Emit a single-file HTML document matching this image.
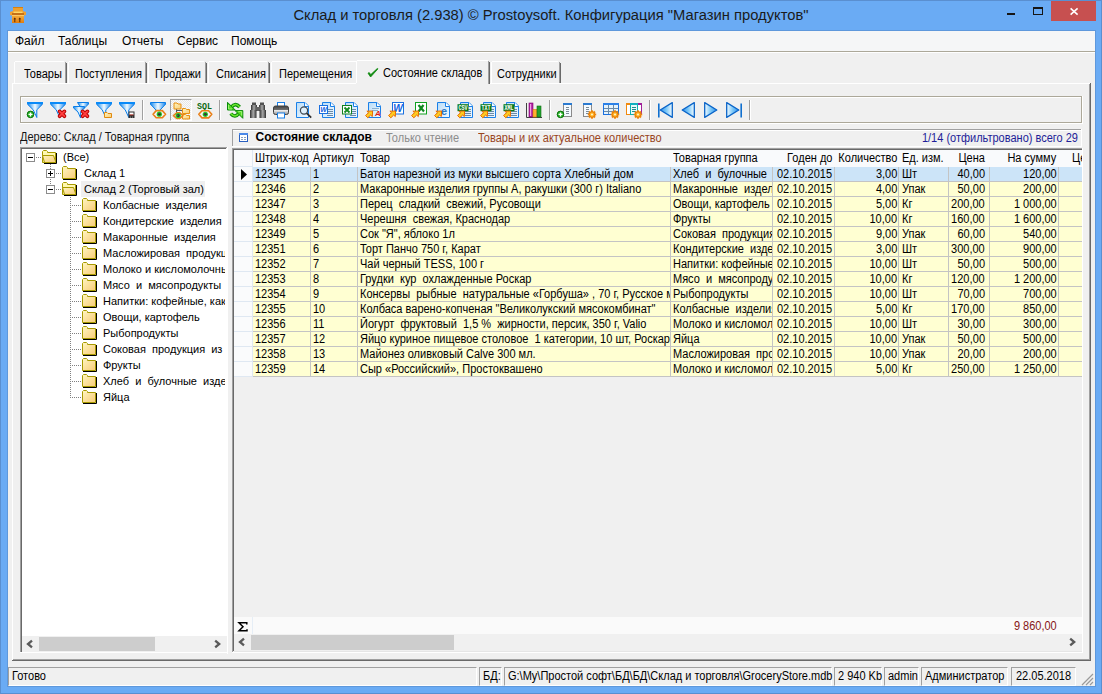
<!DOCTYPE html>
<html><head><meta charset="utf-8"><title>Склад и торговля</title>
<style>
html,body{margin:0;padding:0;width:1102px;height:694px;overflow:hidden;position:relative}
body{font-family:"Liberation Sans", sans-serif;}
div{position:absolute}
.t{white-space:pre;font-family:"Liberation Sans", sans-serif}
.c{white-space:pre;overflow:hidden;font-size:12px;line-height:14px;height:15px;box-sizing:border-box;font-family:"Liberation Sans", sans-serif}
.sl{position:absolute;top:0;transform:scaleX(0.9167);transform-origin:0 0}
.sr{position:absolute;top:0;transform:scaleX(0.9167);transform-origin:100% 0}
svg{position:absolute;overflow:visible}
</style></head><body>
<svg width="0" height="0" style="position:absolute;left:0;top:0">
<defs>
<linearGradient id="gFun" x1="0" x2="1" y1="0" y2="0"><stop offset="0.05" stop-color="#2a94f0"/><stop offset="0.5" stop-color="#f0faff"/><stop offset="0.95" stop-color="#2a90f0"/></linearGradient>
<linearGradient id="gFold" x1="0" x2="1" y1="0" y2="1"><stop offset="0" stop-color="#fff6c0"/><stop offset="1" stop-color="#f8cc78"/></linearGradient>
<linearGradient id="gTriR" x1="0" x2="1" y1="0" y2="0"><stop offset="0" stop-color="#f4fcff"/><stop offset="0.5" stop-color="#7cc8f8"/><stop offset="1" stop-color="#2a90f0"/></linearGradient><linearGradient id="gTriL" x1="1" x2="0" y1="0" y2="0"><stop offset="0" stop-color="#f4fcff"/><stop offset="0.5" stop-color="#7cc8f8"/><stop offset="1" stop-color="#2a90f0"/></linearGradient>
<linearGradient id="gGreen" x1="0" x2="0" y1="0" y2="1"><stop offset="0" stop-color="#90f040"/><stop offset="1" stop-color="#30b010"/></linearGradient>
<linearGradient id="gGray" x1="0" x2="1" y1="0" y2="0"><stop offset="0" stop-color="#303030"/><stop offset="0.5" stop-color="#a8a8a8"/><stop offset="1" stop-color="#303030"/></linearGradient>
<linearGradient id="gPrint" x1="0" x2="0" y1="0" y2="1"><stop offset="0" stop-color="#404040"/><stop offset="0.45" stop-color="#707070"/><stop offset="0.5" stop-color="#f0f0f0"/><stop offset="1" stop-color="#909090"/></linearGradient>
<linearGradient id="gPage" x1="0" x2="1" y1="0" y2="1"><stop offset="0" stop-color="#b8dcf8"/><stop offset="1" stop-color="#f4faff"/></linearGradient>
<linearGradient id="gBox" x1="0" x2="0" y1="0" y2="1"><stop offset="0" stop-color="#f6b040"/><stop offset="1" stop-color="#e07c10"/></linearGradient>
</defs></svg><div style="position:absolute;left:0;top:0;width:1102px;height:694px;background:#6aabf4;"></div>
<div style="position:absolute;left:0px;top:0px;width:1102px;height:1px;background:#5a8fd0"></div>
<div style="position:absolute;left:0px;top:0px;width:1px;height:694px;background:#5a8fd0"></div>
<div style="position:absolute;left:0px;top:693px;width:1102px;height:1px;background:#5a8fd0"></div>
<div style="position:absolute;left:1101px;top:0px;width:1px;height:694px;background:#5a8fd0"></div>
<svg style="position:absolute;left:10px;top:7px" width="16" height="16" viewBox="0 0 16 16"><rect x="3" y="0" width="10" height="6" fill="#eea030"/><rect x="3" y="0" width="10" height="1" fill="#d88010"/><rect x="3.5" y="4.6" width="9" height="1.4" fill="#ffd868"/><path d="M0 5 L3 4 V9 L0 8 Z" fill="#f0a030"/><path d="M16 5 L13 4 V9 L16 8 Z" fill="#f0a030"/><rect x="2" y="6" width="12" height="2" fill="#c47018"/><rect x="2" y="8" width="12" height="8" fill="url(#gBox)"/><rect x="2" y="8" width="12" height="1" fill="#ffc860"/><path d="M3.4 12.2 L4.8 10.6 L6.2 12.2 Z M8.4 12.2 L9.8 10.6 L11.2 12.2 Z" fill="#5a2800"/><path d="M4.8 12 V15.2 M9.8 12 V15.2" stroke="#5a2800" stroke-width="1"/></svg>
<div class="t" style="left:551px;top:7.51px;font-size:14.75px;line-height:14.75px;color:#1b1b1b;font-weight:normal;transform:translateX(-50%);">Склад и торговля (2.938) © Prostoysoft. Конфигурация &quot;Магазин продуктов&quot;</div>
<div style="position:absolute;left:1007px;top:13px;width:8px;height:2px;background:#161616"></div>
<div style="position:absolute;left:1033px;top:7px;width:10px;height:8px;box-sizing:border-box;border:1px solid #161616;border-top-width:2px"></div>
<div style="position:absolute;left:1051px;top:1px;width:45px;height:20px;background:#c75050"></div>
<svg style="position:absolute;left:1066px;top:5px" width="15" height="12" viewBox="0 0 15 12"><path d="M4.6 3.4 L11.6 9.6 M11.6 3.4 L4.6 9.6" stroke="#fff" stroke-width="1.6"/></svg>
<div style="position:absolute;left:7px;top:30px;width:1089px;height:657px;background:#5e98dc"></div>
<div style="position:absolute;left:8px;top:31px;width:1087px;height:655px;background:#f0f0f0"></div>
<div style="position:absolute;left:8px;top:31px;width:1087px;height:20px;background:#f5f6f7"></div>
<div style="position:absolute;left:8px;top:51px;width:1087px;height:1px;background:#aca899"></div>
<div style="position:absolute;left:8px;top:52px;width:1087px;height:1px;background:#ffffff"></div>
<div class="t" style="left:15px;top:34.84px;font-size:12px;line-height:12px;color:#000;font-weight:normal;">Файл</div>
<div class="t" style="left:58px;top:34.84px;font-size:12px;line-height:12px;color:#000;font-weight:normal;">Таблицы</div>
<div class="t" style="left:122px;top:34.84px;font-size:12px;line-height:12px;color:#000;font-weight:normal;">Отчеты</div>
<div class="t" style="left:177px;top:34.84px;font-size:12px;line-height:12px;color:#000;font-weight:normal;">Сервис</div>
<div class="t" style="left:231px;top:34.84px;font-size:12px;line-height:12px;color:#000;font-weight:normal;">Помощь</div>
<div style="position:absolute;left:12px;top:83px;width:1079px;height:578px;background:#f0f0f0"></div>
<div style="position:absolute;left:12px;top:83px;width:1078px;height:1px;background:#fff"></div>
<div style="position:absolute;left:12px;top:83px;width:1px;height:577px;background:#fff"></div>
<div style="position:absolute;left:1089px;top:84px;width:1px;height:576px;background:#a0a0a0"></div>
<div style="position:absolute;left:1090px;top:83px;width:1px;height:578px;background:#696969"></div>
<div style="position:absolute;left:13px;top:659px;width:1077px;height:1px;background:#a0a0a0"></div>
<div style="position:absolute;left:12px;top:660px;width:1079px;height:1px;background:#696969"></div>
<div style="position:absolute;left:14px;top:62px;width:53px;height:21px;background:#f0f0f0"></div>
<div style="position:absolute;left:15px;top:61px;width:49px;height:1px;background:#fff"></div>
<div style="position:absolute;left:14px;top:62px;width:1px;height:21px;background:#fff"></div>
<div style="position:absolute;left:65px;top:62px;width:1px;height:21px;background:#a0a0a0"></div>
<div style="position:absolute;left:66px;top:63px;width:1px;height:20px;background:#696969"></div>
<div class="t" style="left:24px;top:67.84px;font-size:12px;line-height:12px;color:#000;font-weight:normal;transform:scaleX(0.9167);transform-origin:0 0;">Товары</div>
<div style="position:absolute;left:68px;top:62px;width:79px;height:21px;background:#f0f0f0"></div>
<div style="position:absolute;left:69px;top:61px;width:75px;height:1px;background:#fff"></div>
<div style="position:absolute;left:68px;top:62px;width:1px;height:21px;background:#fff"></div>
<div style="position:absolute;left:145px;top:62px;width:1px;height:21px;background:#a0a0a0"></div>
<div style="position:absolute;left:146px;top:63px;width:1px;height:20px;background:#696969"></div>
<div class="t" style="left:75px;top:67.84px;font-size:12px;line-height:12px;color:#000;font-weight:normal;transform:scaleX(0.9167);transform-origin:0 0;">Поступления</div>
<div style="position:absolute;left:148px;top:62px;width:59px;height:21px;background:#f0f0f0"></div>
<div style="position:absolute;left:149px;top:61px;width:55px;height:1px;background:#fff"></div>
<div style="position:absolute;left:148px;top:62px;width:1px;height:21px;background:#fff"></div>
<div style="position:absolute;left:205px;top:62px;width:1px;height:21px;background:#a0a0a0"></div>
<div style="position:absolute;left:206px;top:63px;width:1px;height:20px;background:#696969"></div>
<div class="t" style="left:155px;top:67.84px;font-size:12px;line-height:12px;color:#000;font-weight:normal;transform:scaleX(0.9167);transform-origin:0 0;">Продажи</div>
<div style="position:absolute;left:208px;top:62px;width:62px;height:21px;background:#f0f0f0"></div>
<div style="position:absolute;left:209px;top:61px;width:58px;height:1px;background:#fff"></div>
<div style="position:absolute;left:208px;top:62px;width:1px;height:21px;background:#fff"></div>
<div style="position:absolute;left:268px;top:62px;width:1px;height:21px;background:#a0a0a0"></div>
<div style="position:absolute;left:269px;top:63px;width:1px;height:20px;background:#696969"></div>
<div class="t" style="left:216px;top:67.84px;font-size:12px;line-height:12px;color:#000;font-weight:normal;transform:scaleX(0.9167);transform-origin:0 0;">Списания</div>
<div style="position:absolute;left:271px;top:62px;width:88px;height:21px;background:#f0f0f0"></div>
<div style="position:absolute;left:272px;top:61px;width:84px;height:1px;background:#fff"></div>
<div style="position:absolute;left:271px;top:62px;width:1px;height:21px;background:#fff"></div>
<div class="t" style="left:279px;top:67.84px;font-size:12px;line-height:12px;color:#000;font-weight:normal;transform:scaleX(0.9167);transform-origin:0 0;">Перемещения</div>
<div style="position:absolute;left:491px;top:62px;width:70px;height:21px;background:#f0f0f0"></div>
<div style="position:absolute;left:492px;top:61px;width:66px;height:1px;background:#fff"></div>
<div style="position:absolute;left:491px;top:62px;width:1px;height:21px;background:#fff"></div>
<div style="position:absolute;left:559px;top:62px;width:1px;height:21px;background:#a0a0a0"></div>
<div style="position:absolute;left:560px;top:63px;width:1px;height:20px;background:#696969"></div>
<div class="t" style="left:497px;top:67.84px;font-size:12px;line-height:12px;color:#000;font-weight:normal;transform:scaleX(0.9167);transform-origin:0 0;">Сотрудники</div>
<div style="position:absolute;left:356px;top:61px;width:134px;height:23px;background:#f0f0f0"></div>
<div style="position:absolute;left:357px;top:60px;width:131px;height:1px;background:#fff"></div>
<div style="position:absolute;left:356px;top:61px;width:1px;height:22px;background:#fff"></div>
<div style="position:absolute;left:488px;top:61px;width:1px;height:23px;background:#a0a0a0"></div>
<div style="position:absolute;left:489px;top:62px;width:1px;height:22px;background:#696969"></div>
<svg style="position:absolute;left:367px;top:68px" width="12" height="10" viewBox="0 0 12 10"><path d="M1 5.2 L3.6 9 L11 0.8 L10.2 0.6 L3.8 6.6 L2.2 4.6 Z" fill="#108a10" stroke="#108a10" stroke-width="0.8" stroke-linejoin="round"/></svg>
<div class="t" style="left:383px;top:66.84px;font-size:12px;line-height:12px;color:#000;font-weight:normal;transform:scaleX(0.9167);transform-origin:0 0;">Состояние складов</div>
<div style="position:absolute;left:20px;top:96px;width:1062px;height:1px;background:#aca899"></div>
<div style="position:absolute;left:20px;top:96px;width:1px;height:27px;background:#aca899"></div>
<div style="position:absolute;left:21px;top:97px;width:1060px;height:1px;background:#fff"></div>
<div style="position:absolute;left:21px;top:97px;width:1px;height:25px;background:#fff"></div>
<div style="position:absolute;left:20px;top:122px;width:1062px;height:1px;background:#aca899"></div>
<div style="position:absolute;left:20px;top:123px;width:1063px;height:1px;background:#fff"></div>
<div style="position:absolute;left:1081px;top:96px;width:1px;height:27px;background:#aca899"></div>
<div style="position:absolute;left:1082px;top:96px;width:1px;height:28px;background:#fff"></div>
<div style="position:absolute;left:170px;top:99px;width:22px;height:22px;box-sizing:border-box;border-top:1px solid #a0a0a0;border-left:1px solid #a0a0a0;border-right:1px solid #fff;border-bottom:1px solid #fff;background-color:#f7f7f7;background-image:repeating-conic-gradient(#e6e6e6 0 25%, #fafafa 0 50%);background-size:2px 2px"></div>
<svg style="position:absolute;left:27px;top:102px" width="16" height="16" viewBox="0 0 16 16"><path d="M0.5 0.5 H15.5 V2.2 L9.8 7.8 V15.5 L6.2 7.8 L0.5 2.2 Z" fill="url(#gFun)" stroke="#0a7de8" stroke-width="1" stroke-linejoin="miter"/><rect x="0" y="0" width="16" height="2" fill="#0a8af8"/><circle cx="3.5" cy="12.4" r="3.3" fill="#22b022" stroke="#0a700a" stroke-width="1"/><path d="M1.5 12.4 H5.5 M3.5 10.4 V14.4" stroke="#fff" stroke-width="1.4"/></svg>
<svg style="position:absolute;left:50px;top:102px" width="16" height="16" viewBox="0 0 16 16"><path d="M0.5 0.5 H15.5 V2.2 L9.8 7.8 V15.5 L6.2 7.8 L0.5 2.2 Z" fill="url(#gFun)" stroke="#0a7de8" stroke-width="1" stroke-linejoin="miter"/><rect x="0" y="0" width="16" height="2" fill="#0a8af8"/><g><path d="M9.6 9.4 L14.4 14.2 M14.4 9.4 L9.6 14.2" stroke="#b80000" stroke-width="3.8" stroke-linecap="round"/><path d="M9.6 9.4 L14.4 14.2 M14.4 9.4 L9.6 14.2" stroke="#ff4040" stroke-width="1.8" stroke-linecap="round"/></g></svg>
<svg style="position:absolute;left:73px;top:102px" width="16" height="16" viewBox="0 0 16 16"><path d="M4.5 0.5 H15.5 V2 L11.5 6 H8 Z" fill="url(#gFun)" stroke="#0a7de8"/><path d="M0.5 4.5 H11.5 V6 L7.6 10 V16 L5 10 L0.5 6 Z" fill="url(#gFun)" stroke="#0a7de8"/><g><path d="M9.6 9.4 L14.4 14.2 M14.4 9.4 L9.6 14.2" stroke="#b80000" stroke-width="3.8" stroke-linecap="round"/><path d="M9.6 9.4 L14.4 14.2 M14.4 9.4 L9.6 14.2" stroke="#ff4040" stroke-width="1.8" stroke-linecap="round"/></g></svg>
<svg style="position:absolute;left:96px;top:102px" width="16" height="16" viewBox="0 0 16 16"><path d="M0.5 0.5 H15.5 V2.2 L9.8 7.8 V15.5 L6.2 7.8 L0.5 2.2 Z" fill="url(#gFun)" stroke="#0a7de8" stroke-width="1" stroke-linejoin="miter"/><rect x="0" y="0" width="16" height="2" fill="#0a8af8"/><path d="M8.5 10.5 h2.5 l1 1 h3.5 v4 h-7z" fill="url(#gFold)" stroke="#e08a10"/></svg>
<svg style="position:absolute;left:119px;top:102px" width="16" height="16" viewBox="0 0 16 16"><path d="M0.5 0.5 H15.5 V2.2 L9.8 7.8 V15.5 L6.2 7.8 L0.5 2.2 Z" fill="url(#gFun)" stroke="#0a7de8" stroke-width="1" stroke-linejoin="miter"/><rect x="0" y="0" width="16" height="2" fill="#0a8af8"/><rect x="9.5" y="9.5" width="6" height="6.5" fill="#303030"/><rect x="10.5" y="10.5" width="4" height="2.2" fill="#fff"/><rect x="10.5" y="12.5" width="4" height="0.8" fill="#d03020"/><rect x="11" y="14.6" width="1" height="1" fill="#999"/><rect x="13" y="14.6" width="1" height="1" fill="#999"/></svg>
<svg style="position:absolute;left:150px;top:102px" width="16" height="16" viewBox="0 0 16 16"><path d="M0.5 0.5 H15.5 V2.2 L9.6 8.5 H6.4 L0.5 2.2 Z" fill="url(#gFun)" stroke="#0a7de8"/><path d="M3.0500000000000007 12.2 L6.250000000000001 8.6 H12.350000000000001 L15.55 12.2 L12.350000000000001 15.799999999999999 H6.250000000000001 Z" fill="#f6f6f6" stroke="#e8801a" stroke-width="1.6" stroke-linejoin="round"/><circle cx="9.3" cy="12.2" r="2.6" fill="#28c828"/><circle cx="9.3" cy="12.2" r="1.4" fill="#282828"/><circle cx="9.0" cy="11.799999999999999" r="0.5" fill="#909090"/></svg>
<svg style="position:absolute;left:173px;top:102px" width="16" height="16" viewBox="0 0 16 16"><path d="M3.5 6.5 V11.5 M3.5 8.5 H9" stroke="#505a60" stroke-width="1"/><path d="M1.0 1.0 h3 l1 1 h3 v5 h-7z" fill="url(#gFold)" stroke="#e89010" stroke-width="1"/><path d="M9.5 6.5 h3 l1 1 h3 v4 h-7z" fill="url(#gFold)" stroke="#e89010" stroke-width="1"/><path d="M9.5 12.5 h3 l1 1 h3 v3.5 h-7z" fill="url(#gFold)" stroke="#e89010" stroke-width="1"/><path d="M0.4500000000000002 13.6 L3.6500000000000004 10.85 H6.749999999999999 L9.95 13.6 L6.749999999999999 16.35 H3.6500000000000004 Z" fill="#f6f6f6" stroke="#e8801a" stroke-width="1.6" stroke-linejoin="round"/><circle cx="5.2" cy="13.6" r="2.6" fill="#28c828"/><circle cx="5.2" cy="13.6" r="1.4" fill="#282828"/><circle cx="4.9" cy="13.2" r="0.5" fill="#909090"/></svg>
<svg style="position:absolute;left:196px;top:102px" width="16" height="16" viewBox="0 0 16 16"><text x="8.6" y="7.4" font-family="Liberation Mono" font-weight="bold" font-size="9.5" fill="#0a6a10" text-anchor="middle" textLength="15" lengthAdjust="spacingAndGlyphs">SQL</text><path d="M2.8000000000000007 12.3 L6.000000000000001 8.700000000000001 H12.600000000000001 L15.8 12.3 L12.600000000000001 15.9 H6.000000000000001 Z" fill="#f6f6f6" stroke="#e8801a" stroke-width="1.6" stroke-linejoin="round"/><circle cx="9.3" cy="12.3" r="2.6" fill="#28c828"/><circle cx="9.3" cy="12.3" r="1.4" fill="#282828"/><circle cx="9.0" cy="11.9" r="0.5" fill="#909090"/></svg>
<svg style="position:absolute;left:227px;top:102px" width="16" height="16" viewBox="0 0 16 16"><g transform="translate(0 -0.2)"><g transform="rotate(0 8 8)"><path d="M4.2 5.6 Q8.3 0.2 12.6 5.2" fill="none" stroke="#0a8a0a" stroke-width="3.6"/><path d="M4.2 5.6 Q8.3 0.2 12.6 5.2" fill="none" stroke="#6ee830" stroke-width="1.5"/><path d="M0.5 0.5 V8.2 H8.2 Z" fill="#52d820" stroke="#0a8a0a" stroke-width="1" stroke-linejoin="miter"/><path d="M1.6 3.2 V7.2 H5" fill="none" stroke="#b8ff90" stroke-width="0.8"/></g></g><g transform="translate(0.3 0.8)"><g transform="rotate(180 8 8)"><path d="M4.2 5.6 Q8.3 0.2 12.6 5.2" fill="none" stroke="#0a8a0a" stroke-width="3.6"/><path d="M4.2 5.6 Q8.3 0.2 12.6 5.2" fill="none" stroke="#6ee830" stroke-width="1.5"/><path d="M0.5 0.5 V8.2 H8.2 Z" fill="#52d820" stroke="#0a8a0a" stroke-width="1" stroke-linejoin="miter"/><path d="M1.6 3.2 V7.2 H5" fill="none" stroke="#b8ff90" stroke-width="0.8"/></g></g></svg>
<svg style="position:absolute;left:250px;top:102px" width="16" height="16" viewBox="0 0 16 16"><rect x="2" y="0.5" width="4" height="3" fill="#505050"/><rect x="10" y="0.5" width="4" height="3" fill="#505050"/><rect x="1" y="3" width="6" height="6" fill="url(#gGray)"/><rect x="9" y="3" width="6" height="6" fill="url(#gGray)"/><rect x="6" y="5" width="4" height="4" fill="#606060"/><rect x="0" y="8" width="6.5" height="8" fill="url(#gGray)"/><rect x="9.5" y="8" width="6.5" height="8" fill="url(#gGray)"/></svg>
<svg style="position:absolute;left:273px;top:102px" width="16" height="16" viewBox="0 0 16 16"><rect x="4.5" y="0.5" width="7" height="5" fill="#fff" stroke="#1a80e8"/><rect x="0.5" y="4" width="15" height="8.5" rx="2" fill="url(#gPrint)" stroke="#404040" stroke-width="1"/><rect x="4.5" y="11" width="7" height="5" fill="#fff" stroke="#1a80e8"/></svg>
<svg style="position:absolute;left:296px;top:102px" width="16" height="16" viewBox="0 0 16 16"><path d="M0.5 0.5 H9 L12.5 4 V15.5 H0.5 Z" fill="url(#gPage)" stroke="#1a80e8"/><path d="M8.5 0.5 V4.5 H12.5" fill="#fff" stroke="#1a80e8"/><circle cx="8" cy="8.5" r="3.6" fill="#dff0fb" stroke="#404850" stroke-width="1.2"/><path d="M10.6 11.2 L15.2 15.6" stroke="#303030" stroke-width="1.8"/></svg>
<svg style="position:absolute;left:319px;top:102px" width="16" height="16" viewBox="0 0 16 16"><path d="M3.5 0.5 H12 L15.5 4 V15.5 H3.5 Z" fill="url(#gPage)" stroke="#1a80e8" stroke-width="1"/><path d="M11.5 0.5 V4.5 H15.5" fill="#fff" stroke="#1a80e8" stroke-width="1"/><path d="M8 7.5 H14 M8 9.5 H14 M8 11.5 H14 M8 13.5 H14" stroke="#6a8aa8" stroke-width="1"/><rect x="0.5" y="3.5" width="8" height="8" fill="#fff" stroke="#1a70e0"/><text x="4.5" y="10" font-family="Liberation Sans" font-weight="bold" font-style="italic" font-size="7" fill="#1060e0" text-anchor="middle">W</text></svg>
<svg style="position:absolute;left:342px;top:102px" width="16" height="16" viewBox="0 0 16 16"><path d="M3.5 0.5 H12 L15.5 4 V15.5 H3.5 Z" fill="url(#gPage)" stroke="#1a80e8" stroke-width="1"/><path d="M11.5 0.5 V4.5 H15.5" fill="#fff" stroke="#1a80e8" stroke-width="1"/><path d="M8 7.5 H14 M8 9.5 H14 M8 11.5 H14 M8 13.5 H14" stroke="#6a8aa8" stroke-width="1"/><rect x="0.5" y="3.5" width="9" height="8.5" fill="#fff" stroke="#108020"/><path d="M2.5 5.5 L7.5 10.5 M7.5 5.5 L2.5 10.5" stroke="#108a20" stroke-width="1.8"/></svg>
<svg style="position:absolute;left:365px;top:102px" width="16" height="16" viewBox="0 0 16 16"><path d="M3.5 0.5 H12 L15.5 4 V15.5 H3.5 Z" fill="url(#gPage)" stroke="#1a80e8" stroke-width="1"/><path d="M11.5 0.5 V4.5 H15.5" fill="#fff" stroke="#1a80e8" stroke-width="1"/><path d="M7 6.5 H14 M7 8.5 H13" stroke="#88b0d0"/><text x="13" y="14" font-family="Liberation Sans" font-weight="bold" font-style="italic" font-size="8" fill="#e02010" text-anchor="middle">A</text><path d="M7.6 9 L7.3 14.6 L5.7 13 L2.8 15.8 L0.6 13.6 L3.5 10.7 L1.9 9.2 Z" fill="#ffcc20" stroke="#e86800" stroke-width="1" stroke-linejoin="round"/></svg>
<svg style="position:absolute;left:388px;top:102px" width="16" height="16" viewBox="0 0 16 16"><rect x="4.5" y="0.5" width="11" height="11.5" fill="#fff" stroke="#1a70e0"/><text x="10" y="10" font-family="Liberation Sans" font-weight="bold" font-style="italic" font-size="10" fill="#1060e0" text-anchor="middle">W</text><path d="M7.6 9 L7.3 14.6 L5.7 13 L2.8 15.8 L0.6 13.6 L3.5 10.7 L1.9 9.2 Z" fill="#ffcc20" stroke="#e86800" stroke-width="1" stroke-linejoin="round"/></svg>
<svg style="position:absolute;left:411px;top:102px" width="16" height="16" viewBox="0 0 16 16"><rect x="4.5" y="0.5" width="11" height="11.5" fill="#fff" stroke="#10a020"/><path d="M7.5 3 L13 9.5 M12.5 3 L7.5 9.5" stroke="#108a20" stroke-width="2.2"/><path d="M7.6 9 L7.3 14.6 L5.7 13 L2.8 15.8 L0.6 13.6 L3.5 10.7 L1.9 9.2 Z" fill="#ffcc20" stroke="#e86800" stroke-width="1" stroke-linejoin="round"/></svg>
<svg style="position:absolute;left:434px;top:102px" width="16" height="16" viewBox="0 0 16 16"><path d="M3.5 0.5 H12 L15.5 4 V15.5 H3.5 Z" fill="url(#gPage)" stroke="#1a80e8" stroke-width="1"/><path d="M11.5 0.5 V4.5 H15.5" fill="#fff" stroke="#1a80e8" stroke-width="1"/><text x="10" y="13" font-family="Liberation Sans" font-weight="bold" font-size="11" fill="#2a78c8" text-anchor="middle">e</text><path d="M7.6 9 L7.3 14.6 L5.7 13 L2.8 15.8 L0.6 13.6 L3.5 10.7 L1.9 9.2 Z" fill="#ffcc20" stroke="#e86800" stroke-width="1" stroke-linejoin="round"/></svg>
<svg style="position:absolute;left:457px;top:102px" width="16" height="16" viewBox="0 0 16 16"><path d="M3.5 0.5 H12 L15.5 4 V15.5 H3.5 Z" fill="url(#gPage)" stroke="#1a80e8" stroke-width="1"/><path d="M11.5 0.5 V4.5 H15.5" fill="#fff" stroke="#1a80e8" stroke-width="1"/><path d="M8 7.5 H14 M8 9.5 H14 M8 11.5 H14 M8 13.5 H14" stroke="#6a8aa8" stroke-width="1"/><rect x="0.5" y="2.2" width="11" height="7" fill="#0a7a1a"/><text x="6.0" y="8.2" font-family="Liberation Mono" font-weight="bold" font-size="7" fill="#fff" text-anchor="middle" textLength="9" lengthAdjust="spacingAndGlyphs">CSV</text><path d="M7.6 9 L7.3 14.6 L5.7 13 L2.8 15.8 L0.6 13.6 L3.5 10.7 L1.9 9.2 Z" fill="#ffcc20" stroke="#e86800" stroke-width="1" stroke-linejoin="round"/></svg>
<svg style="position:absolute;left:480px;top:102px" width="16" height="16" viewBox="0 0 16 16"><path d="M3.5 0.5 H12 L15.5 4 V15.5 H3.5 Z" fill="url(#gPage)" stroke="#1a80e8" stroke-width="1"/><path d="M11.5 0.5 V4.5 H15.5" fill="#fff" stroke="#1a80e8" stroke-width="1"/><path d="M8 7.5 H14 M8 9.5 H14 M8 11.5 H14 M8 13.5 H14" stroke="#6a8aa8" stroke-width="1"/><rect x="0.5" y="2.2" width="11" height="7" fill="#0a7a1a"/><text x="6.0" y="8.2" font-family="Liberation Mono" font-weight="bold" font-size="7" fill="#fff" text-anchor="middle" textLength="9" lengthAdjust="spacingAndGlyphs">TXT</text><path d="M7.6 9 L7.3 14.6 L5.7 13 L2.8 15.8 L0.6 13.6 L3.5 10.7 L1.9 9.2 Z" fill="#ffcc20" stroke="#e86800" stroke-width="1" stroke-linejoin="round"/></svg>
<svg style="position:absolute;left:503px;top:102px" width="16" height="16" viewBox="0 0 16 16"><path d="M3.5 0.5 H12 L15.5 4 V15.5 H3.5 Z" fill="url(#gPage)" stroke="#1a80e8" stroke-width="1"/><path d="M11.5 0.5 V4.5 H15.5" fill="#fff" stroke="#1a80e8" stroke-width="1"/><path d="M8 7.5 H14 M8 9.5 H14 M8 11.5 H14 M8 13.5 H14" stroke="#6a8aa8" stroke-width="1"/><rect x="0.5" y="2.2" width="11" height="7" fill="#0a7a1a"/><text x="6.0" y="8.2" font-family="Liberation Mono" font-weight="bold" font-size="7" fill="#fff" text-anchor="middle" textLength="9" lengthAdjust="spacingAndGlyphs">XML</text><path d="M7.6 9 L7.3 14.6 L5.7 13 L2.8 15.8 L0.6 13.6 L3.5 10.7 L1.9 9.2 Z" fill="#ffcc20" stroke="#e86800" stroke-width="1" stroke-linejoin="round"/></svg>
<svg style="position:absolute;left:526px;top:102px" width="16" height="16" viewBox="0 0 16 16"><path d="M0.5 1 V15.5 H16" fill="none" stroke="#404040" stroke-width="1"/><rect x="3" y="1" width="4" height="14" fill="#b020a0" stroke="#800070" stroke-width="0.6"/><rect x="4" y="2" width="1.2" height="12" fill="#f0a0e8"/><rect x="7" y="7.5" width="4" height="7.5" fill="#ffb030" stroke="#d08010" stroke-width="0.6"/><rect x="11" y="4" width="4" height="11" fill="#20a030" stroke="#107010" stroke-width="0.6"/></svg>
<svg style="position:absolute;left:557px;top:102px" width="16" height="16" viewBox="0 0 16 16"><rect x="6.5" y="1.5" width="8" height="13" fill="#f4faff" stroke="#8a8a8a"/><rect x="6" y="1" width="9" height="2" fill="#2a7ad0"/><path d="M9 5.5 H12 M9 7.5 H12 M9 9.5 H12 M9 11.5 H12" stroke="#7a8a98"/><circle cx="3.5" cy="12.4" r="3.3" fill="#22b022" stroke="#0a700a" stroke-width="1"/><path d="M1.5 12.4 H5.5 M3.5 10.4 V14.4" stroke="#fff" stroke-width="1.4"/></svg>
<svg style="position:absolute;left:580px;top:102px" width="16" height="16" viewBox="0 0 16 16"><rect x="3.5" y="1.5" width="8" height="13" fill="#f4faff" stroke="#8a8a8a"/><rect x="3" y="1" width="9" height="2" fill="#2a7ad0"/><path d="M6 5.5 H9 M6 7.5 H9 M6 9.5 H9 M6 11.5 H9" stroke="#7a8a98"/><rect x="11" y="8.3" width="2" height="2.2" fill="#f08a10" transform="rotate(0 12 12.5)"/><rect x="11" y="8.3" width="2" height="2.2" fill="#f08a10" transform="rotate(45 12 12.5)"/><rect x="11" y="8.3" width="2" height="2.2" fill="#f08a10" transform="rotate(90 12 12.5)"/><rect x="11" y="8.3" width="2" height="2.2" fill="#f08a10" transform="rotate(135 12 12.5)"/><rect x="11" y="8.3" width="2" height="2.2" fill="#f08a10" transform="rotate(180 12 12.5)"/><rect x="11" y="8.3" width="2" height="2.2" fill="#f08a10" transform="rotate(225 12 12.5)"/><rect x="11" y="8.3" width="2" height="2.2" fill="#f08a10" transform="rotate(270 12 12.5)"/><rect x="11" y="8.3" width="2" height="2.2" fill="#f08a10" transform="rotate(315 12 12.5)"/><circle cx="12" cy="12.5" r="2.8" fill="#ffb020" stroke="#e07000" stroke-width="0.8"/><circle cx="12" cy="12.5" r="1.1" fill="#fff2c0"/></svg>
<svg style="position:absolute;left:603px;top:102px" width="16" height="16" viewBox="0 0 16 16"><rect x="0.5" y="1.5" width="15" height="11" fill="#e4f2fc" stroke="#1a70e0"/><rect x="0" y="1" width="16" height="2" fill="#2a80e8"/><path d="M1 6.5 H15 M1 9.5 H15 M5.5 3 V12 M10.5 3 V12" stroke="#6a8aa8"/><rect x="11" y="8.3" width="2" height="2.2" fill="#f08a10" transform="rotate(0 12 12.5)"/><rect x="11" y="8.3" width="2" height="2.2" fill="#f08a10" transform="rotate(45 12 12.5)"/><rect x="11" y="8.3" width="2" height="2.2" fill="#f08a10" transform="rotate(90 12 12.5)"/><rect x="11" y="8.3" width="2" height="2.2" fill="#f08a10" transform="rotate(135 12 12.5)"/><rect x="11" y="8.3" width="2" height="2.2" fill="#f08a10" transform="rotate(180 12 12.5)"/><rect x="11" y="8.3" width="2" height="2.2" fill="#f08a10" transform="rotate(225 12 12.5)"/><rect x="11" y="8.3" width="2" height="2.2" fill="#f08a10" transform="rotate(270 12 12.5)"/><rect x="11" y="8.3" width="2" height="2.2" fill="#f08a10" transform="rotate(315 12 12.5)"/><circle cx="12" cy="12.5" r="2.8" fill="#ffb020" stroke="#e07000" stroke-width="0.8"/><circle cx="12" cy="12.5" r="1.1" fill="#fff2c0"/></svg>
<svg style="position:absolute;left:626px;top:102px" width="16" height="16" viewBox="0 0 16 16"><rect x="0.5" y="1.5" width="6" height="11" fill="#fff" stroke="#f08a10"/><rect x="0" y="1" width="7" height="2" fill="#f08a10"/><rect x="9.5" y="1.5" width="6" height="11" fill="#fff" stroke="#a0209a"/><rect x="9" y="1" width="7" height="2" fill="#a0209a"/><rect x="4.5" y="1.5" width="7" height="11" fill="#e8fafa" stroke="#10b0b0"/><rect x="4" y="1" width="8" height="2" fill="#10b0c0"/><path d="M6 5.5 H10 M6 7.5 H10 M6 9.5 H10" stroke="#208a90"/><rect x="11" y="8.3" width="2" height="2.2" fill="#f08a10" transform="rotate(0 12 12.5)"/><rect x="11" y="8.3" width="2" height="2.2" fill="#f08a10" transform="rotate(45 12 12.5)"/><rect x="11" y="8.3" width="2" height="2.2" fill="#f08a10" transform="rotate(90 12 12.5)"/><rect x="11" y="8.3" width="2" height="2.2" fill="#f08a10" transform="rotate(135 12 12.5)"/><rect x="11" y="8.3" width="2" height="2.2" fill="#f08a10" transform="rotate(180 12 12.5)"/><rect x="11" y="8.3" width="2" height="2.2" fill="#f08a10" transform="rotate(225 12 12.5)"/><rect x="11" y="8.3" width="2" height="2.2" fill="#f08a10" transform="rotate(270 12 12.5)"/><rect x="11" y="8.3" width="2" height="2.2" fill="#f08a10" transform="rotate(315 12 12.5)"/><circle cx="12" cy="12.5" r="2.8" fill="#ffb020" stroke="#e07000" stroke-width="0.8"/><circle cx="12" cy="12.5" r="1.1" fill="#fff2c0"/></svg>
<svg style="position:absolute;left:657px;top:102px" width="16" height="16" viewBox="0 0 16 16"><rect x="1" y="1.5" width="1.6" height="14" fill="#1070d0"/><path d="M15.3 0.6 V15.4 L3.2 8 Z" fill="url(#gTriL)" stroke="#0a64c8" stroke-width="1.3" stroke-linejoin="round"/></svg>
<svg style="position:absolute;left:680px;top:102px" width="16" height="16" viewBox="0 0 16 16"><path d="M14.3 0.6 V15.4 L2.2 8 Z" fill="url(#gTriL)" stroke="#0a64c8" stroke-width="1.3" stroke-linejoin="round"/></svg>
<svg style="position:absolute;left:703px;top:102px" width="16" height="16" viewBox="0 0 16 16"><path d="M1.7 0.6 V15.4 L13.8 8 Z" fill="url(#gTriR)" stroke="#0a64c8" stroke-width="1.3" stroke-linejoin="round"/></svg>
<svg style="position:absolute;left:726px;top:102px" width="16" height="16" viewBox="0 0 16 16"><rect x="14.4" y="1.5" width="1.6" height="14" fill="#1070d0"/><path d="M0.7 0.6 V15.4 L12.8 8 Z" fill="url(#gTriR)" stroke="#0a64c8" stroke-width="1.3" stroke-linejoin="round"/></svg>
<div style="position:absolute;left:142px;top:100px;width:1px;height:20px;background:#a0a0a0"></div>
<div style="position:absolute;left:143px;top:100px;width:1px;height:20px;background:#fff"></div>
<div style="position:absolute;left:219px;top:100px;width:1px;height:20px;background:#a0a0a0"></div>
<div style="position:absolute;left:220px;top:100px;width:1px;height:20px;background:#fff"></div>
<div style="position:absolute;left:549px;top:100px;width:1px;height:20px;background:#a0a0a0"></div>
<div style="position:absolute;left:550px;top:100px;width:1px;height:20px;background:#fff"></div>
<div style="position:absolute;left:649px;top:100px;width:1px;height:20px;background:#a0a0a0"></div>
<div style="position:absolute;left:650px;top:100px;width:1px;height:20px;background:#fff"></div>
<div style="position:absolute;left:749px;top:100px;width:1px;height:20px;background:#a0a0a0"></div>
<div style="position:absolute;left:750px;top:100px;width:1px;height:20px;background:#fff"></div>
<div class="t" style="left:20px;top:131.14px;font-size:12px;line-height:12px;color:#141414;font-weight:normal;transform:scaleX(0.9167);transform-origin:0 0;">Дерево: Склад / Товарная группа</div>
<div style="position:absolute;left:20px;top:147px;width:207px;height:1px;background:#a0a0a0"></div>
<div style="position:absolute;left:20px;top:147px;width:1px;height:506px;background:#a0a0a0"></div>
<div style="position:absolute;left:21px;top:148px;width:205px;height:1px;background:#696969"></div>
<div style="position:absolute;left:21px;top:148px;width:1px;height:504px;background:#696969"></div>
<div style="position:absolute;left:22px;top:149px;width:205px;height:503px;background:#fff"></div>
<div style="position:absolute;left:227px;top:147px;width:1px;height:507px;background:#fff"></div>
<div style="position:absolute;left:20px;top:652px;width:208px;height:1px;background:#fff"></div>
<div style="position:absolute;left:22px;top:149px;width:203px;height:487px;overflow:hidden">
<div style="position:absolute;left:4px;top:4px;width:9px;height:9px;box-sizing:border-box;border:1px solid #8c8c8c;background:#fff"></div>
<div style="position:absolute;left:6px;top:8px;width:5px;height:1px;background:#000"></div>
<div style="position:absolute;left:14px;top:8px;width:1px;height:1px;background:#808080"></div>
<div style="position:absolute;left:16px;top:8px;width:1px;height:1px;background:#808080"></div>
<div style="position:absolute;left:18px;top:8px;width:1px;height:1px;background:#808080"></div>
<svg style="position:absolute;left:20px;top:1px" width="16" height="14" viewBox="0 0 16 14"><path d="M0.5 1.5 L1.5 0.5 H4.5 L5.5 1.5 V2.5 H13.5 V12.5 H0.5 Z" fill="#fff8b0" stroke="#a89a00" stroke-width="1"/><path d="M0.5 5.5 H11.5 L14 12.5 H2.5 Z" fill="url(#gFold)" stroke="#a89a00" stroke-width="1"/><path d="M14.5 3 V13.5 H2" fill="none" stroke="#000" stroke-width="1"/></svg>
<div class="t" style="left:41px;top:2.69px;font-size:11px;line-height:11px;color:#000;font-weight:normal;">(Все)</div>
<div style="position:absolute;left:28px;top:15px;width:1px;height:1px;background:#808080"></div>
<div style="position:absolute;left:28px;top:17px;width:1px;height:1px;background:#808080"></div>
<div style="position:absolute;left:28px;top:19px;width:1px;height:1px;background:#808080"></div>
<div style="position:absolute;left:28px;top:30px;width:1px;height:1px;background:#808080"></div>
<div style="position:absolute;left:28px;top:32px;width:1px;height:1px;background:#808080"></div>
<div style="position:absolute;left:28px;top:34px;width:1px;height:1px;background:#808080"></div>
<div style="position:absolute;left:24px;top:20px;width:9px;height:9px;box-sizing:border-box;border:1px solid #8c8c8c;background:#fff"></div>
<div style="position:absolute;left:26px;top:24px;width:5px;height:1px;background:#000"></div>
<div style="position:absolute;left:28px;top:22px;width:1px;height:5px;background:#000"></div>
<div style="position:absolute;left:34px;top:24px;width:1px;height:1px;background:#808080"></div>
<div style="position:absolute;left:36px;top:24px;width:1px;height:1px;background:#808080"></div>
<div style="position:absolute;left:38px;top:24px;width:1px;height:1px;background:#808080"></div>
<svg style="position:absolute;left:40px;top:17px" width="16" height="14" viewBox="0 0 16 14"><path d="M0.5 1.5 L1.5 0.5 H4.5 L5.5 1.5 V2.5 H13.5 V12.5 H0.5 Z" fill="url(#gFold)" stroke="#a89a00" stroke-width="1"/><path d="M14.5 3 V13.5 H1" fill="none" stroke="#000" stroke-width="1"/></svg>
<div class="t" style="left:62px;top:18.69px;font-size:11px;line-height:11px;color:#000;font-weight:normal;">Склад 1</div>
<div style="position:absolute;left:59px;top:32px;width:124px;height:16px;background:#efefef"></div>
<div style="position:absolute;left:24px;top:36px;width:9px;height:9px;box-sizing:border-box;border:1px solid #8c8c8c;background:#fff"></div>
<div style="position:absolute;left:26px;top:40px;width:5px;height:1px;background:#000"></div>
<div style="position:absolute;left:34px;top:40px;width:1px;height:1px;background:#808080"></div>
<div style="position:absolute;left:36px;top:40px;width:1px;height:1px;background:#808080"></div>
<div style="position:absolute;left:38px;top:40px;width:1px;height:1px;background:#808080"></div>
<svg style="position:absolute;left:40px;top:33px" width="16" height="14" viewBox="0 0 16 14"><path d="M0.5 1.5 L1.5 0.5 H4.5 L5.5 1.5 V2.5 H13.5 V12.5 H0.5 Z" fill="#fff8b0" stroke="#a89a00" stroke-width="1"/><path d="M0.5 5.5 H11.5 L14 12.5 H2.5 Z" fill="url(#gFold)" stroke="#a89a00" stroke-width="1"/><path d="M14.5 3 V13.5 H2" fill="none" stroke="#000" stroke-width="1"/></svg>
<div class="t" style="left:62px;top:34.69px;font-size:11px;line-height:11px;color:#000;font-weight:normal;">Склад 2 (Торговый зал)</div>
<div style="position:absolute;left:48px;top:48px;width:1px;height:1px;background:#808080"></div>
<div style="position:absolute;left:48px;top:50px;width:1px;height:1px;background:#808080"></div>
<div style="position:absolute;left:48px;top:52px;width:1px;height:1px;background:#808080"></div>
<div style="position:absolute;left:48px;top:54px;width:1px;height:1px;background:#808080"></div>
<div style="position:absolute;left:48px;top:56px;width:1px;height:1px;background:#808080"></div>
<div style="position:absolute;left:48px;top:58px;width:1px;height:1px;background:#808080"></div>
<div style="position:absolute;left:48px;top:60px;width:1px;height:1px;background:#808080"></div>
<div style="position:absolute;left:48px;top:62px;width:1px;height:1px;background:#808080"></div>
<div style="position:absolute;left:48px;top:64px;width:1px;height:1px;background:#808080"></div>
<div style="position:absolute;left:48px;top:66px;width:1px;height:1px;background:#808080"></div>
<div style="position:absolute;left:48px;top:68px;width:1px;height:1px;background:#808080"></div>
<div style="position:absolute;left:48px;top:70px;width:1px;height:1px;background:#808080"></div>
<div style="position:absolute;left:48px;top:72px;width:1px;height:1px;background:#808080"></div>
<div style="position:absolute;left:48px;top:74px;width:1px;height:1px;background:#808080"></div>
<div style="position:absolute;left:48px;top:76px;width:1px;height:1px;background:#808080"></div>
<div style="position:absolute;left:48px;top:78px;width:1px;height:1px;background:#808080"></div>
<div style="position:absolute;left:48px;top:80px;width:1px;height:1px;background:#808080"></div>
<div style="position:absolute;left:48px;top:82px;width:1px;height:1px;background:#808080"></div>
<div style="position:absolute;left:48px;top:84px;width:1px;height:1px;background:#808080"></div>
<div style="position:absolute;left:48px;top:86px;width:1px;height:1px;background:#808080"></div>
<div style="position:absolute;left:48px;top:88px;width:1px;height:1px;background:#808080"></div>
<div style="position:absolute;left:48px;top:90px;width:1px;height:1px;background:#808080"></div>
<div style="position:absolute;left:48px;top:92px;width:1px;height:1px;background:#808080"></div>
<div style="position:absolute;left:48px;top:94px;width:1px;height:1px;background:#808080"></div>
<div style="position:absolute;left:48px;top:96px;width:1px;height:1px;background:#808080"></div>
<div style="position:absolute;left:48px;top:98px;width:1px;height:1px;background:#808080"></div>
<div style="position:absolute;left:48px;top:100px;width:1px;height:1px;background:#808080"></div>
<div style="position:absolute;left:48px;top:102px;width:1px;height:1px;background:#808080"></div>
<div style="position:absolute;left:48px;top:104px;width:1px;height:1px;background:#808080"></div>
<div style="position:absolute;left:48px;top:106px;width:1px;height:1px;background:#808080"></div>
<div style="position:absolute;left:48px;top:108px;width:1px;height:1px;background:#808080"></div>
<div style="position:absolute;left:48px;top:110px;width:1px;height:1px;background:#808080"></div>
<div style="position:absolute;left:48px;top:112px;width:1px;height:1px;background:#808080"></div>
<div style="position:absolute;left:48px;top:114px;width:1px;height:1px;background:#808080"></div>
<div style="position:absolute;left:48px;top:116px;width:1px;height:1px;background:#808080"></div>
<div style="position:absolute;left:48px;top:118px;width:1px;height:1px;background:#808080"></div>
<div style="position:absolute;left:48px;top:120px;width:1px;height:1px;background:#808080"></div>
<div style="position:absolute;left:48px;top:122px;width:1px;height:1px;background:#808080"></div>
<div style="position:absolute;left:48px;top:124px;width:1px;height:1px;background:#808080"></div>
<div style="position:absolute;left:48px;top:126px;width:1px;height:1px;background:#808080"></div>
<div style="position:absolute;left:48px;top:128px;width:1px;height:1px;background:#808080"></div>
<div style="position:absolute;left:48px;top:130px;width:1px;height:1px;background:#808080"></div>
<div style="position:absolute;left:48px;top:132px;width:1px;height:1px;background:#808080"></div>
<div style="position:absolute;left:48px;top:134px;width:1px;height:1px;background:#808080"></div>
<div style="position:absolute;left:48px;top:136px;width:1px;height:1px;background:#808080"></div>
<div style="position:absolute;left:48px;top:138px;width:1px;height:1px;background:#808080"></div>
<div style="position:absolute;left:48px;top:140px;width:1px;height:1px;background:#808080"></div>
<div style="position:absolute;left:48px;top:142px;width:1px;height:1px;background:#808080"></div>
<div style="position:absolute;left:48px;top:144px;width:1px;height:1px;background:#808080"></div>
<div style="position:absolute;left:48px;top:146px;width:1px;height:1px;background:#808080"></div>
<div style="position:absolute;left:48px;top:148px;width:1px;height:1px;background:#808080"></div>
<div style="position:absolute;left:48px;top:150px;width:1px;height:1px;background:#808080"></div>
<div style="position:absolute;left:48px;top:152px;width:1px;height:1px;background:#808080"></div>
<div style="position:absolute;left:48px;top:154px;width:1px;height:1px;background:#808080"></div>
<div style="position:absolute;left:48px;top:156px;width:1px;height:1px;background:#808080"></div>
<div style="position:absolute;left:48px;top:158px;width:1px;height:1px;background:#808080"></div>
<div style="position:absolute;left:48px;top:160px;width:1px;height:1px;background:#808080"></div>
<div style="position:absolute;left:48px;top:162px;width:1px;height:1px;background:#808080"></div>
<div style="position:absolute;left:48px;top:164px;width:1px;height:1px;background:#808080"></div>
<div style="position:absolute;left:48px;top:166px;width:1px;height:1px;background:#808080"></div>
<div style="position:absolute;left:48px;top:168px;width:1px;height:1px;background:#808080"></div>
<div style="position:absolute;left:48px;top:170px;width:1px;height:1px;background:#808080"></div>
<div style="position:absolute;left:48px;top:172px;width:1px;height:1px;background:#808080"></div>
<div style="position:absolute;left:48px;top:174px;width:1px;height:1px;background:#808080"></div>
<div style="position:absolute;left:48px;top:176px;width:1px;height:1px;background:#808080"></div>
<div style="position:absolute;left:48px;top:178px;width:1px;height:1px;background:#808080"></div>
<div style="position:absolute;left:48px;top:180px;width:1px;height:1px;background:#808080"></div>
<div style="position:absolute;left:48px;top:182px;width:1px;height:1px;background:#808080"></div>
<div style="position:absolute;left:48px;top:184px;width:1px;height:1px;background:#808080"></div>
<div style="position:absolute;left:48px;top:186px;width:1px;height:1px;background:#808080"></div>
<div style="position:absolute;left:48px;top:188px;width:1px;height:1px;background:#808080"></div>
<div style="position:absolute;left:48px;top:190px;width:1px;height:1px;background:#808080"></div>
<div style="position:absolute;left:48px;top:192px;width:1px;height:1px;background:#808080"></div>
<div style="position:absolute;left:48px;top:194px;width:1px;height:1px;background:#808080"></div>
<div style="position:absolute;left:48px;top:196px;width:1px;height:1px;background:#808080"></div>
<div style="position:absolute;left:48px;top:198px;width:1px;height:1px;background:#808080"></div>
<div style="position:absolute;left:48px;top:200px;width:1px;height:1px;background:#808080"></div>
<div style="position:absolute;left:48px;top:202px;width:1px;height:1px;background:#808080"></div>
<div style="position:absolute;left:48px;top:204px;width:1px;height:1px;background:#808080"></div>
<div style="position:absolute;left:48px;top:206px;width:1px;height:1px;background:#808080"></div>
<div style="position:absolute;left:48px;top:208px;width:1px;height:1px;background:#808080"></div>
<div style="position:absolute;left:48px;top:210px;width:1px;height:1px;background:#808080"></div>
<div style="position:absolute;left:48px;top:212px;width:1px;height:1px;background:#808080"></div>
<div style="position:absolute;left:48px;top:214px;width:1px;height:1px;background:#808080"></div>
<div style="position:absolute;left:48px;top:216px;width:1px;height:1px;background:#808080"></div>
<div style="position:absolute;left:48px;top:218px;width:1px;height:1px;background:#808080"></div>
<div style="position:absolute;left:48px;top:220px;width:1px;height:1px;background:#808080"></div>
<div style="position:absolute;left:48px;top:222px;width:1px;height:1px;background:#808080"></div>
<div style="position:absolute;left:48px;top:224px;width:1px;height:1px;background:#808080"></div>
<div style="position:absolute;left:48px;top:226px;width:1px;height:1px;background:#808080"></div>
<div style="position:absolute;left:48px;top:228px;width:1px;height:1px;background:#808080"></div>
<div style="position:absolute;left:48px;top:230px;width:1px;height:1px;background:#808080"></div>
<div style="position:absolute;left:48px;top:232px;width:1px;height:1px;background:#808080"></div>
<div style="position:absolute;left:48px;top:234px;width:1px;height:1px;background:#808080"></div>
<div style="position:absolute;left:48px;top:236px;width:1px;height:1px;background:#808080"></div>
<div style="position:absolute;left:48px;top:238px;width:1px;height:1px;background:#808080"></div>
<div style="position:absolute;left:48px;top:240px;width:1px;height:1px;background:#808080"></div>
<div style="position:absolute;left:48px;top:242px;width:1px;height:1px;background:#808080"></div>
<div style="position:absolute;left:48px;top:244px;width:1px;height:1px;background:#808080"></div>
<div style="position:absolute;left:48px;top:246px;width:1px;height:1px;background:#808080"></div>
<div style="position:absolute;left:48px;top:248px;width:1px;height:1px;background:#808080"></div>
<div style="position:absolute;left:50px;top:56px;width:1px;height:1px;background:#808080"></div>
<div style="position:absolute;left:52px;top:56px;width:1px;height:1px;background:#808080"></div>
<div style="position:absolute;left:54px;top:56px;width:1px;height:1px;background:#808080"></div>
<div style="position:absolute;left:56px;top:56px;width:1px;height:1px;background:#808080"></div>
<div style="position:absolute;left:58px;top:56px;width:1px;height:1px;background:#808080"></div>
<svg style="position:absolute;left:60px;top:49px" width="16" height="14" viewBox="0 0 16 14"><path d="M0.5 1.5 L1.5 0.5 H4.5 L5.5 1.5 V2.5 H13.5 V12.5 H0.5 Z" fill="url(#gFold)" stroke="#a89a00" stroke-width="1"/><path d="M14.5 3 V13.5 H1" fill="none" stroke="#000" stroke-width="1"/></svg>
<div class="t" style="left:81px;top:50.69px;font-size:11px;line-height:11px;color:#000;font-weight:normal;">Колбасные  изделия</div>
<div style="position:absolute;left:50px;top:72px;width:1px;height:1px;background:#808080"></div>
<div style="position:absolute;left:52px;top:72px;width:1px;height:1px;background:#808080"></div>
<div style="position:absolute;left:54px;top:72px;width:1px;height:1px;background:#808080"></div>
<div style="position:absolute;left:56px;top:72px;width:1px;height:1px;background:#808080"></div>
<div style="position:absolute;left:58px;top:72px;width:1px;height:1px;background:#808080"></div>
<svg style="position:absolute;left:60px;top:65px" width="16" height="14" viewBox="0 0 16 14"><path d="M0.5 1.5 L1.5 0.5 H4.5 L5.5 1.5 V2.5 H13.5 V12.5 H0.5 Z" fill="url(#gFold)" stroke="#a89a00" stroke-width="1"/><path d="M14.5 3 V13.5 H1" fill="none" stroke="#000" stroke-width="1"/></svg>
<div class="t" style="left:81px;top:66.69px;font-size:11px;line-height:11px;color:#000;font-weight:normal;">Кондитерские  изделия</div>
<div style="position:absolute;left:50px;top:88px;width:1px;height:1px;background:#808080"></div>
<div style="position:absolute;left:52px;top:88px;width:1px;height:1px;background:#808080"></div>
<div style="position:absolute;left:54px;top:88px;width:1px;height:1px;background:#808080"></div>
<div style="position:absolute;left:56px;top:88px;width:1px;height:1px;background:#808080"></div>
<div style="position:absolute;left:58px;top:88px;width:1px;height:1px;background:#808080"></div>
<svg style="position:absolute;left:60px;top:81px" width="16" height="14" viewBox="0 0 16 14"><path d="M0.5 1.5 L1.5 0.5 H4.5 L5.5 1.5 V2.5 H13.5 V12.5 H0.5 Z" fill="url(#gFold)" stroke="#a89a00" stroke-width="1"/><path d="M14.5 3 V13.5 H1" fill="none" stroke="#000" stroke-width="1"/></svg>
<div class="t" style="left:81px;top:82.69px;font-size:11px;line-height:11px;color:#000;font-weight:normal;">Макаронные  изделия</div>
<div style="position:absolute;left:50px;top:104px;width:1px;height:1px;background:#808080"></div>
<div style="position:absolute;left:52px;top:104px;width:1px;height:1px;background:#808080"></div>
<div style="position:absolute;left:54px;top:104px;width:1px;height:1px;background:#808080"></div>
<div style="position:absolute;left:56px;top:104px;width:1px;height:1px;background:#808080"></div>
<div style="position:absolute;left:58px;top:104px;width:1px;height:1px;background:#808080"></div>
<svg style="position:absolute;left:60px;top:97px" width="16" height="14" viewBox="0 0 16 14"><path d="M0.5 1.5 L1.5 0.5 H4.5 L5.5 1.5 V2.5 H13.5 V12.5 H0.5 Z" fill="url(#gFold)" stroke="#a89a00" stroke-width="1"/><path d="M14.5 3 V13.5 H1" fill="none" stroke="#000" stroke-width="1"/></svg>
<div class="t" style="left:81px;top:98.69px;font-size:11px;line-height:11px;color:#000;font-weight:normal;">Масложировая  продукция</div>
<div style="position:absolute;left:50px;top:120px;width:1px;height:1px;background:#808080"></div>
<div style="position:absolute;left:52px;top:120px;width:1px;height:1px;background:#808080"></div>
<div style="position:absolute;left:54px;top:120px;width:1px;height:1px;background:#808080"></div>
<div style="position:absolute;left:56px;top:120px;width:1px;height:1px;background:#808080"></div>
<div style="position:absolute;left:58px;top:120px;width:1px;height:1px;background:#808080"></div>
<svg style="position:absolute;left:60px;top:113px" width="16" height="14" viewBox="0 0 16 14"><path d="M0.5 1.5 L1.5 0.5 H4.5 L5.5 1.5 V2.5 H13.5 V12.5 H0.5 Z" fill="url(#gFold)" stroke="#a89a00" stroke-width="1"/><path d="M14.5 3 V13.5 H1" fill="none" stroke="#000" stroke-width="1"/></svg>
<div class="t" style="left:81px;top:114.69px;font-size:11px;line-height:11px;color:#000;font-weight:normal;">Молоко и кисломолочные продукты</div>
<div style="position:absolute;left:50px;top:136px;width:1px;height:1px;background:#808080"></div>
<div style="position:absolute;left:52px;top:136px;width:1px;height:1px;background:#808080"></div>
<div style="position:absolute;left:54px;top:136px;width:1px;height:1px;background:#808080"></div>
<div style="position:absolute;left:56px;top:136px;width:1px;height:1px;background:#808080"></div>
<div style="position:absolute;left:58px;top:136px;width:1px;height:1px;background:#808080"></div>
<svg style="position:absolute;left:60px;top:129px" width="16" height="14" viewBox="0 0 16 14"><path d="M0.5 1.5 L1.5 0.5 H4.5 L5.5 1.5 V2.5 H13.5 V12.5 H0.5 Z" fill="url(#gFold)" stroke="#a89a00" stroke-width="1"/><path d="M14.5 3 V13.5 H1" fill="none" stroke="#000" stroke-width="1"/></svg>
<div class="t" style="left:81px;top:130.69px;font-size:11px;line-height:11px;color:#000;font-weight:normal;">Мясо  и  мясопродукты</div>
<div style="position:absolute;left:50px;top:152px;width:1px;height:1px;background:#808080"></div>
<div style="position:absolute;left:52px;top:152px;width:1px;height:1px;background:#808080"></div>
<div style="position:absolute;left:54px;top:152px;width:1px;height:1px;background:#808080"></div>
<div style="position:absolute;left:56px;top:152px;width:1px;height:1px;background:#808080"></div>
<div style="position:absolute;left:58px;top:152px;width:1px;height:1px;background:#808080"></div>
<svg style="position:absolute;left:60px;top:145px" width="16" height="14" viewBox="0 0 16 14"><path d="M0.5 1.5 L1.5 0.5 H4.5 L5.5 1.5 V2.5 H13.5 V12.5 H0.5 Z" fill="url(#gFold)" stroke="#a89a00" stroke-width="1"/><path d="M14.5 3 V13.5 H1" fill="none" stroke="#000" stroke-width="1"/></svg>
<div class="t" style="left:81px;top:146.69px;font-size:11px;line-height:11px;color:#000;font-weight:normal;">Напитки: кофейные, какао, чай</div>
<div style="position:absolute;left:50px;top:168px;width:1px;height:1px;background:#808080"></div>
<div style="position:absolute;left:52px;top:168px;width:1px;height:1px;background:#808080"></div>
<div style="position:absolute;left:54px;top:168px;width:1px;height:1px;background:#808080"></div>
<div style="position:absolute;left:56px;top:168px;width:1px;height:1px;background:#808080"></div>
<div style="position:absolute;left:58px;top:168px;width:1px;height:1px;background:#808080"></div>
<svg style="position:absolute;left:60px;top:161px" width="16" height="14" viewBox="0 0 16 14"><path d="M0.5 1.5 L1.5 0.5 H4.5 L5.5 1.5 V2.5 H13.5 V12.5 H0.5 Z" fill="url(#gFold)" stroke="#a89a00" stroke-width="1"/><path d="M14.5 3 V13.5 H1" fill="none" stroke="#000" stroke-width="1"/></svg>
<div class="t" style="left:81px;top:162.69px;font-size:11px;line-height:11px;color:#000;font-weight:normal;">Овощи, картофель</div>
<div style="position:absolute;left:50px;top:184px;width:1px;height:1px;background:#808080"></div>
<div style="position:absolute;left:52px;top:184px;width:1px;height:1px;background:#808080"></div>
<div style="position:absolute;left:54px;top:184px;width:1px;height:1px;background:#808080"></div>
<div style="position:absolute;left:56px;top:184px;width:1px;height:1px;background:#808080"></div>
<div style="position:absolute;left:58px;top:184px;width:1px;height:1px;background:#808080"></div>
<svg style="position:absolute;left:60px;top:177px" width="16" height="14" viewBox="0 0 16 14"><path d="M0.5 1.5 L1.5 0.5 H4.5 L5.5 1.5 V2.5 H13.5 V12.5 H0.5 Z" fill="url(#gFold)" stroke="#a89a00" stroke-width="1"/><path d="M14.5 3 V13.5 H1" fill="none" stroke="#000" stroke-width="1"/></svg>
<div class="t" style="left:81px;top:178.69px;font-size:11px;line-height:11px;color:#000;font-weight:normal;">Рыбопродукты</div>
<div style="position:absolute;left:50px;top:200px;width:1px;height:1px;background:#808080"></div>
<div style="position:absolute;left:52px;top:200px;width:1px;height:1px;background:#808080"></div>
<div style="position:absolute;left:54px;top:200px;width:1px;height:1px;background:#808080"></div>
<div style="position:absolute;left:56px;top:200px;width:1px;height:1px;background:#808080"></div>
<div style="position:absolute;left:58px;top:200px;width:1px;height:1px;background:#808080"></div>
<svg style="position:absolute;left:60px;top:193px" width="16" height="14" viewBox="0 0 16 14"><path d="M0.5 1.5 L1.5 0.5 H4.5 L5.5 1.5 V2.5 H13.5 V12.5 H0.5 Z" fill="url(#gFold)" stroke="#a89a00" stroke-width="1"/><path d="M14.5 3 V13.5 H1" fill="none" stroke="#000" stroke-width="1"/></svg>
<div class="t" style="left:81px;top:194.69px;font-size:11px;line-height:11px;color:#000;font-weight:normal;">Соковая  продукция  из  фруктов</div>
<div style="position:absolute;left:50px;top:216px;width:1px;height:1px;background:#808080"></div>
<div style="position:absolute;left:52px;top:216px;width:1px;height:1px;background:#808080"></div>
<div style="position:absolute;left:54px;top:216px;width:1px;height:1px;background:#808080"></div>
<div style="position:absolute;left:56px;top:216px;width:1px;height:1px;background:#808080"></div>
<div style="position:absolute;left:58px;top:216px;width:1px;height:1px;background:#808080"></div>
<svg style="position:absolute;left:60px;top:209px" width="16" height="14" viewBox="0 0 16 14"><path d="M0.5 1.5 L1.5 0.5 H4.5 L5.5 1.5 V2.5 H13.5 V12.5 H0.5 Z" fill="url(#gFold)" stroke="#a89a00" stroke-width="1"/><path d="M14.5 3 V13.5 H1" fill="none" stroke="#000" stroke-width="1"/></svg>
<div class="t" style="left:81px;top:210.69px;font-size:11px;line-height:11px;color:#000;font-weight:normal;">Фрукты</div>
<div style="position:absolute;left:50px;top:232px;width:1px;height:1px;background:#808080"></div>
<div style="position:absolute;left:52px;top:232px;width:1px;height:1px;background:#808080"></div>
<div style="position:absolute;left:54px;top:232px;width:1px;height:1px;background:#808080"></div>
<div style="position:absolute;left:56px;top:232px;width:1px;height:1px;background:#808080"></div>
<div style="position:absolute;left:58px;top:232px;width:1px;height:1px;background:#808080"></div>
<svg style="position:absolute;left:60px;top:225px" width="16" height="14" viewBox="0 0 16 14"><path d="M0.5 1.5 L1.5 0.5 H4.5 L5.5 1.5 V2.5 H13.5 V12.5 H0.5 Z" fill="url(#gFold)" stroke="#a89a00" stroke-width="1"/><path d="M14.5 3 V13.5 H1" fill="none" stroke="#000" stroke-width="1"/></svg>
<div class="t" style="left:81px;top:226.69px;font-size:11px;line-height:11px;color:#000;font-weight:normal;">Хлеб  и  булочные  изделия</div>
<div style="position:absolute;left:50px;top:248px;width:1px;height:1px;background:#808080"></div>
<div style="position:absolute;left:52px;top:248px;width:1px;height:1px;background:#808080"></div>
<div style="position:absolute;left:54px;top:248px;width:1px;height:1px;background:#808080"></div>
<div style="position:absolute;left:56px;top:248px;width:1px;height:1px;background:#808080"></div>
<div style="position:absolute;left:58px;top:248px;width:1px;height:1px;background:#808080"></div>
<svg style="position:absolute;left:60px;top:241px" width="16" height="14" viewBox="0 0 16 14"><path d="M0.5 1.5 L1.5 0.5 H4.5 L5.5 1.5 V2.5 H13.5 V12.5 H0.5 Z" fill="url(#gFold)" stroke="#a89a00" stroke-width="1"/><path d="M14.5 3 V13.5 H1" fill="none" stroke="#000" stroke-width="1"/></svg>
<div class="t" style="left:81px;top:242.69px;font-size:11px;line-height:11px;color:#000;font-weight:normal;">Яйца</div>
</div>
<div style="position:absolute;left:22px;top:636px;width:205px;height:16px;background:#f0f0f0"></div>
<div style="position:absolute;left:39px;top:637px;width:116px;height:14px;background:#cdcdcd"></div>
<svg style="position:absolute;left:26px;top:640.0px" width="8" height="8" viewBox="0 0 8 8"><path d="M6 0.6 L2 4 L6 7.4" fill="none" stroke="#5a5a5a" stroke-width="2.3"/></svg>
<svg style="position:absolute;left:214px;top:640.0px" width="8" height="8" viewBox="0 0 8 8"><path d="M1.2 0.6 L5.2 4 L1.2 7.4" fill="none" stroke="#5a5a5a" stroke-width="2.3"/></svg>
<div style="position:absolute;left:232px;top:129px;width:849px;height:1px;background:#a0a0a0"></div>
<div style="position:absolute;left:232px;top:129px;width:1px;height:18px;background:#a0a0a0"></div>
<div style="position:absolute;left:233px;top:130px;width:848px;height:1px;background:#fff"></div>
<div style="position:absolute;left:232px;top:146px;width:849px;height:1px;background:#fff"></div>
<div style="position:absolute;left:1081px;top:129px;width:1px;height:18px;background:#fff"></div>
<svg style="position:absolute;left:239px;top:133px" width="9" height="9" viewBox="0 0 9 9"><rect x="0" y="0" width="9" height="9" fill="#2a60c0"/><rect x="1" y="2" width="7" height="6" fill="#fff"/><rect x="0" y="0" width="9" height="2" fill="#4a88e8"/><path d="M2 4.5 H4 M5 4.5 H7 M2 6.5 H4 M5 6.5 H7" stroke="#8aa0c0" stroke-width="1"/></svg>
<div class="t" style="left:255.5px;top:130.84px;font-size:12px;line-height:12px;color:#000;font-weight:bold;">Состояние складов</div>
<div class="t" style="left:386px;top:131.84px;font-size:12px;line-height:12px;color:#8d8d8d;font-weight:normal;transform:scaleX(0.9167);transform-origin:0 0;">Только чтение</div>
<div class="t" style="left:478px;top:131.84px;font-size:12px;line-height:12px;color:#99451c;font-weight:normal;transform:scaleX(0.9167);transform-origin:0 0;">Товары и их актуальное количество</div>
<div class="t" style="left:1077.5px;top:131.84px;font-size:12px;line-height:12px;color:#1e1e98;transform:translateX(-100%) scaleX(0.9167);transform-origin:100% 0">1/14 (отфильтровано) всего 29</div>
<div style="position:absolute;left:232px;top:148px;width:851px;height:1px;background:#a0a0a0"></div>
<div style="position:absolute;left:232px;top:148px;width:1px;height:504px;background:#a0a0a0"></div>
<div style="position:absolute;left:233px;top:149px;width:849px;height:1px;background:#696969"></div>
<div style="position:absolute;left:233px;top:149px;width:1px;height:502px;background:#696969"></div>
<div style="position:absolute;left:234px;top:150px;width:848px;height:502px;background:#f0f0f0"></div>
<div style="position:absolute;left:1082px;top:148px;width:1px;height:505px;background:#fff"></div>
<div style="position:absolute;left:232px;top:652px;width:851px;height:1px;background:#fff"></div>
<div style="position:absolute;left:234px;top:150px;width:848px;height:17px;background:#f9fafc"></div>
<div style="position:absolute;left:234px;top:167px;width:18px;height:210px;background:#fafbfc"></div>
<div style="position:absolute;left:252px;top:150px;width:1px;height:227px;background:#dfe8f2"></div>
<div class="c" style="left:253px;top:150.84px;width:57px;color:#000"><span class="sl" style="left:2px">Штрих-код</span></div>
<div class="c" style="left:311px;top:150.84px;width:46px;color:#000"><span class="sl" style="left:2px">Артикул</span></div>
<div class="c" style="left:358px;top:150.84px;width:312px;color:#000"><span class="sl" style="left:2px">Товар</span></div>
<div class="c" style="left:671px;top:150.84px;width:101px;color:#000"><span class="sl" style="left:1.5px">Товарная группа</span></div>
<div class="c" style="left:773px;top:150.84px;width:61px;color:#000"><span class="sr" style="right:2px">Годен до</span></div>
<div class="c" style="left:835px;top:150.84px;width:63px;color:#000"><span class="sr" style="right:1px">Количество</span></div>
<div class="c" style="left:899px;top:150.84px;width:49px;color:#000"><span class="sl" style="left:3px">Ед. изм.</span></div>
<div class="c" style="left:949px;top:150.84px;width:40px;color:#000"><span class="sr" style="right:4px">Цена</span></div>
<div class="c" style="left:990px;top:150.84px;width:68px;color:#000"><span class="sr" style="right:1.5px">На сумму</span></div>
<div class="c" style="left:1059px;top:150.84px;width:23px"><span class="sl" style="left:13px">Цена</span></div>
<div style="position:absolute;left:234px;top:166px;width:18px;height:1px;background:#dfe8f2"></div>
<div style="position:absolute;left:253px;top:167px;width:829px;height:14px;background:#cce4f8"></div>
<div style="position:absolute;left:253px;top:181px;width:829px;height:1px;background:#c4c4c4"></div>
<div style="position:absolute;left:234px;top:181px;width:18px;height:1px;background:#dfe8f2"></div>
<div class="c" style="left:253px;top:166.84px;width:57px;color:#000"><span class="sl" style="left:2px">12345</span></div>
<div class="c" style="left:311px;top:166.84px;width:46px;color:#000"><span class="sl" style="left:2px">1</span></div>
<div class="c" style="left:358px;top:166.84px;width:312px;color:#000"><span class="sl" style="left:2px">Батон нарезной из муки высшего сорта Хлебный дом</span></div>
<div class="c" style="left:671px;top:166.84px;width:101px;color:#000"><span class="sl" style="left:1.5px">Хлеб  и  булочные  изделия</span></div>
<div class="c" style="left:773px;top:166.84px;width:61px;color:#000"><span class="sr" style="right:2px">02.10.2015</span></div>
<div class="c" style="left:835px;top:166.84px;width:63px;color:#000"><span class="sr" style="right:1px">3,00</span></div>
<div class="c" style="left:899px;top:166.84px;width:49px;color:#000"><span class="sl" style="left:3px">Шт</span></div>
<div class="c" style="left:949px;top:166.84px;width:40px;color:#000"><span class="sr" style="right:4px">40,00</span></div>
<div class="c" style="left:990px;top:166.84px;width:68px;color:#000"><span class="sr" style="right:1.5px">120,00</span></div>
<div class="c" style="left:1059px;top:166.84px;width:23px;color:#000"><span class="sl" style="left:2px"></span></div>
<div style="position:absolute;left:253px;top:182px;width:829px;height:14px;background:#ffffd2"></div>
<div style="position:absolute;left:253px;top:196px;width:829px;height:1px;background:#c4c4c4"></div>
<div style="position:absolute;left:234px;top:196px;width:18px;height:1px;background:#dfe8f2"></div>
<div class="c" style="left:253px;top:181.84px;width:57px;color:#000"><span class="sl" style="left:2px">12346</span></div>
<div class="c" style="left:311px;top:181.84px;width:46px;color:#000"><span class="sl" style="left:2px">2</span></div>
<div class="c" style="left:358px;top:181.84px;width:312px;color:#000"><span class="sl" style="left:2px">Макаронные изделия группы А, ракушки (300 г) Italiano</span></div>
<div class="c" style="left:671px;top:181.84px;width:101px;color:#000"><span class="sl" style="left:1.5px">Макаронные  изделия</span></div>
<div class="c" style="left:773px;top:181.84px;width:61px;color:#000"><span class="sr" style="right:2px">02.10.2015</span></div>
<div class="c" style="left:835px;top:181.84px;width:63px;color:#000"><span class="sr" style="right:1px">4,00</span></div>
<div class="c" style="left:899px;top:181.84px;width:49px;color:#000"><span class="sl" style="left:3px">Упак</span></div>
<div class="c" style="left:949px;top:181.84px;width:40px;color:#000"><span class="sr" style="right:4px">50,00</span></div>
<div class="c" style="left:990px;top:181.84px;width:68px;color:#000"><span class="sr" style="right:1.5px">200,00</span></div>
<div class="c" style="left:1059px;top:181.84px;width:23px;color:#000"><span class="sl" style="left:2px"></span></div>
<div style="position:absolute;left:253px;top:197px;width:829px;height:14px;background:#ffffd2"></div>
<div style="position:absolute;left:253px;top:211px;width:829px;height:1px;background:#c4c4c4"></div>
<div style="position:absolute;left:234px;top:211px;width:18px;height:1px;background:#dfe8f2"></div>
<div class="c" style="left:253px;top:196.84px;width:57px;color:#000"><span class="sl" style="left:2px">12347</span></div>
<div class="c" style="left:311px;top:196.84px;width:46px;color:#000"><span class="sl" style="left:2px">3</span></div>
<div class="c" style="left:358px;top:196.84px;width:312px;color:#000"><span class="sl" style="left:2px">Перец  сладкий  свежий, Русовощи</span></div>
<div class="c" style="left:671px;top:196.84px;width:101px;color:#000"><span class="sl" style="left:1.5px">Овощи, картофель</span></div>
<div class="c" style="left:773px;top:196.84px;width:61px;color:#000"><span class="sr" style="right:2px">02.10.2015</span></div>
<div class="c" style="left:835px;top:196.84px;width:63px;color:#000"><span class="sr" style="right:1px">5,00</span></div>
<div class="c" style="left:899px;top:196.84px;width:49px;color:#000"><span class="sl" style="left:3px">Кг</span></div>
<div class="c" style="left:949px;top:196.84px;width:40px;color:#000"><span class="sr" style="right:4px">200,00</span></div>
<div class="c" style="left:990px;top:196.84px;width:68px;color:#000"><span class="sr" style="right:1.5px">1 000,00</span></div>
<div class="c" style="left:1059px;top:196.84px;width:23px;color:#000"><span class="sl" style="left:2px"></span></div>
<div style="position:absolute;left:253px;top:212px;width:829px;height:14px;background:#ffffd2"></div>
<div style="position:absolute;left:253px;top:226px;width:829px;height:1px;background:#c4c4c4"></div>
<div style="position:absolute;left:234px;top:226px;width:18px;height:1px;background:#dfe8f2"></div>
<div class="c" style="left:253px;top:211.84px;width:57px;color:#000"><span class="sl" style="left:2px">12348</span></div>
<div class="c" style="left:311px;top:211.84px;width:46px;color:#000"><span class="sl" style="left:2px">4</span></div>
<div class="c" style="left:358px;top:211.84px;width:312px;color:#000"><span class="sl" style="left:2px">Черешня  свежая, Краснодар</span></div>
<div class="c" style="left:671px;top:211.84px;width:101px;color:#000"><span class="sl" style="left:1.5px">Фрукты</span></div>
<div class="c" style="left:773px;top:211.84px;width:61px;color:#000"><span class="sr" style="right:2px">02.10.2015</span></div>
<div class="c" style="left:835px;top:211.84px;width:63px;color:#000"><span class="sr" style="right:1px">10,00</span></div>
<div class="c" style="left:899px;top:211.84px;width:49px;color:#000"><span class="sl" style="left:3px">Кг</span></div>
<div class="c" style="left:949px;top:211.84px;width:40px;color:#000"><span class="sr" style="right:4px">160,00</span></div>
<div class="c" style="left:990px;top:211.84px;width:68px;color:#000"><span class="sr" style="right:1.5px">1 600,00</span></div>
<div class="c" style="left:1059px;top:211.84px;width:23px;color:#000"><span class="sl" style="left:2px"></span></div>
<div style="position:absolute;left:253px;top:227px;width:829px;height:14px;background:#ffffd2"></div>
<div style="position:absolute;left:253px;top:241px;width:829px;height:1px;background:#c4c4c4"></div>
<div style="position:absolute;left:234px;top:241px;width:18px;height:1px;background:#dfe8f2"></div>
<div class="c" style="left:253px;top:226.84px;width:57px;color:#000"><span class="sl" style="left:2px">12349</span></div>
<div class="c" style="left:311px;top:226.84px;width:46px;color:#000"><span class="sl" style="left:2px">5</span></div>
<div class="c" style="left:358px;top:226.84px;width:312px;color:#000"><span class="sl" style="left:2px">Сок &quot;Я&quot;, яблоко 1л</span></div>
<div class="c" style="left:671px;top:226.84px;width:101px;color:#000"><span class="sl" style="left:1.5px">Соковая  продукция  из  фруктов</span></div>
<div class="c" style="left:773px;top:226.84px;width:61px;color:#000"><span class="sr" style="right:2px">02.10.2015</span></div>
<div class="c" style="left:835px;top:226.84px;width:63px;color:#000"><span class="sr" style="right:1px">9,00</span></div>
<div class="c" style="left:899px;top:226.84px;width:49px;color:#000"><span class="sl" style="left:3px">Упак</span></div>
<div class="c" style="left:949px;top:226.84px;width:40px;color:#000"><span class="sr" style="right:4px">60,00</span></div>
<div class="c" style="left:990px;top:226.84px;width:68px;color:#000"><span class="sr" style="right:1.5px">540,00</span></div>
<div class="c" style="left:1059px;top:226.84px;width:23px;color:#000"><span class="sl" style="left:2px"></span></div>
<div style="position:absolute;left:253px;top:242px;width:829px;height:14px;background:#ffffd2"></div>
<div style="position:absolute;left:253px;top:256px;width:829px;height:1px;background:#c4c4c4"></div>
<div style="position:absolute;left:234px;top:256px;width:18px;height:1px;background:#dfe8f2"></div>
<div class="c" style="left:253px;top:241.84px;width:57px;color:#000"><span class="sl" style="left:2px">12351</span></div>
<div class="c" style="left:311px;top:241.84px;width:46px;color:#000"><span class="sl" style="left:2px">6</span></div>
<div class="c" style="left:358px;top:241.84px;width:312px;color:#000"><span class="sl" style="left:2px">Торт Панчо 750 г, Карат</span></div>
<div class="c" style="left:671px;top:241.84px;width:101px;color:#000"><span class="sl" style="left:1.5px">Кондитерские  изделия</span></div>
<div class="c" style="left:773px;top:241.84px;width:61px;color:#000"><span class="sr" style="right:2px">02.10.2015</span></div>
<div class="c" style="left:835px;top:241.84px;width:63px;color:#000"><span class="sr" style="right:1px">3,00</span></div>
<div class="c" style="left:899px;top:241.84px;width:49px;color:#000"><span class="sl" style="left:3px">Шт</span></div>
<div class="c" style="left:949px;top:241.84px;width:40px;color:#000"><span class="sr" style="right:4px">300,00</span></div>
<div class="c" style="left:990px;top:241.84px;width:68px;color:#000"><span class="sr" style="right:1.5px">900,00</span></div>
<div class="c" style="left:1059px;top:241.84px;width:23px;color:#000"><span class="sl" style="left:2px"></span></div>
<div style="position:absolute;left:253px;top:257px;width:829px;height:14px;background:#ffffd2"></div>
<div style="position:absolute;left:253px;top:271px;width:829px;height:1px;background:#c4c4c4"></div>
<div style="position:absolute;left:234px;top:271px;width:18px;height:1px;background:#dfe8f2"></div>
<div class="c" style="left:253px;top:256.84px;width:57px;color:#000"><span class="sl" style="left:2px">12352</span></div>
<div class="c" style="left:311px;top:256.84px;width:46px;color:#000"><span class="sl" style="left:2px">7</span></div>
<div class="c" style="left:358px;top:256.84px;width:312px;color:#000"><span class="sl" style="left:2px">Чай черный TESS, 100 г</span></div>
<div class="c" style="left:671px;top:256.84px;width:101px;color:#000"><span class="sl" style="left:1.5px">Напитки: кофейные, какао</span></div>
<div class="c" style="left:773px;top:256.84px;width:61px;color:#000"><span class="sr" style="right:2px">02.10.2015</span></div>
<div class="c" style="left:835px;top:256.84px;width:63px;color:#000"><span class="sr" style="right:1px">10,00</span></div>
<div class="c" style="left:899px;top:256.84px;width:49px;color:#000"><span class="sl" style="left:3px">Шт</span></div>
<div class="c" style="left:949px;top:256.84px;width:40px;color:#000"><span class="sr" style="right:4px">50,00</span></div>
<div class="c" style="left:990px;top:256.84px;width:68px;color:#000"><span class="sr" style="right:1.5px">500,00</span></div>
<div class="c" style="left:1059px;top:256.84px;width:23px;color:#000"><span class="sl" style="left:2px"></span></div>
<div style="position:absolute;left:253px;top:272px;width:829px;height:14px;background:#ffffd2"></div>
<div style="position:absolute;left:253px;top:286px;width:829px;height:1px;background:#c4c4c4"></div>
<div style="position:absolute;left:234px;top:286px;width:18px;height:1px;background:#dfe8f2"></div>
<div class="c" style="left:253px;top:271.84px;width:57px;color:#000"><span class="sl" style="left:2px">12353</span></div>
<div class="c" style="left:311px;top:271.84px;width:46px;color:#000"><span class="sl" style="left:2px">8</span></div>
<div class="c" style="left:358px;top:271.84px;width:312px;color:#000"><span class="sl" style="left:2px">Грудки  кур  охлажденные Роскар</span></div>
<div class="c" style="left:671px;top:271.84px;width:101px;color:#000"><span class="sl" style="left:1.5px">Мясо  и  мясопродукты</span></div>
<div class="c" style="left:773px;top:271.84px;width:61px;color:#000"><span class="sr" style="right:2px">02.10.2015</span></div>
<div class="c" style="left:835px;top:271.84px;width:63px;color:#000"><span class="sr" style="right:1px">10,00</span></div>
<div class="c" style="left:899px;top:271.84px;width:49px;color:#000"><span class="sl" style="left:3px">Кг</span></div>
<div class="c" style="left:949px;top:271.84px;width:40px;color:#000"><span class="sr" style="right:4px">120,00</span></div>
<div class="c" style="left:990px;top:271.84px;width:68px;color:#000"><span class="sr" style="right:1.5px">1 200,00</span></div>
<div class="c" style="left:1059px;top:271.84px;width:23px;color:#000"><span class="sl" style="left:2px"></span></div>
<div style="position:absolute;left:253px;top:287px;width:829px;height:14px;background:#ffffd2"></div>
<div style="position:absolute;left:253px;top:301px;width:829px;height:1px;background:#c4c4c4"></div>
<div style="position:absolute;left:234px;top:301px;width:18px;height:1px;background:#dfe8f2"></div>
<div class="c" style="left:253px;top:286.84px;width:57px;color:#000"><span class="sl" style="left:2px">12354</span></div>
<div class="c" style="left:311px;top:286.84px;width:46px;color:#000"><span class="sl" style="left:2px">9</span></div>
<div class="c" style="left:358px;top:286.84px;width:312px;color:#000"><span class="sl" style="left:2px">Консервы  рыбные  натуральные «Горбуша» , 70 г, Русское море</span></div>
<div class="c" style="left:671px;top:286.84px;width:101px;color:#000"><span class="sl" style="left:1.5px">Рыбопродукты</span></div>
<div class="c" style="left:773px;top:286.84px;width:61px;color:#000"><span class="sr" style="right:2px">02.10.2015</span></div>
<div class="c" style="left:835px;top:286.84px;width:63px;color:#000"><span class="sr" style="right:1px">10,00</span></div>
<div class="c" style="left:899px;top:286.84px;width:49px;color:#000"><span class="sl" style="left:3px">Шт</span></div>
<div class="c" style="left:949px;top:286.84px;width:40px;color:#000"><span class="sr" style="right:4px">70,00</span></div>
<div class="c" style="left:990px;top:286.84px;width:68px;color:#000"><span class="sr" style="right:1.5px">700,00</span></div>
<div class="c" style="left:1059px;top:286.84px;width:23px;color:#000"><span class="sl" style="left:2px"></span></div>
<div style="position:absolute;left:253px;top:302px;width:829px;height:14px;background:#ffffd2"></div>
<div style="position:absolute;left:253px;top:316px;width:829px;height:1px;background:#c4c4c4"></div>
<div style="position:absolute;left:234px;top:316px;width:18px;height:1px;background:#dfe8f2"></div>
<div class="c" style="left:253px;top:301.84px;width:57px;color:#000"><span class="sl" style="left:2px">12355</span></div>
<div class="c" style="left:311px;top:301.84px;width:46px;color:#000"><span class="sl" style="left:2px">10</span></div>
<div class="c" style="left:358px;top:301.84px;width:312px;color:#000"><span class="sl" style="left:2px">Колбаса варено-копченая &quot;Великолукский мясокомбинат&quot;</span></div>
<div class="c" style="left:671px;top:301.84px;width:101px;color:#000"><span class="sl" style="left:1.5px">Колбасные  изделия</span></div>
<div class="c" style="left:773px;top:301.84px;width:61px;color:#000"><span class="sr" style="right:2px">02.10.2015</span></div>
<div class="c" style="left:835px;top:301.84px;width:63px;color:#000"><span class="sr" style="right:1px">5,00</span></div>
<div class="c" style="left:899px;top:301.84px;width:49px;color:#000"><span class="sl" style="left:3px">Кг</span></div>
<div class="c" style="left:949px;top:301.84px;width:40px;color:#000"><span class="sr" style="right:4px">170,00</span></div>
<div class="c" style="left:990px;top:301.84px;width:68px;color:#000"><span class="sr" style="right:1.5px">850,00</span></div>
<div class="c" style="left:1059px;top:301.84px;width:23px;color:#000"><span class="sl" style="left:2px"></span></div>
<div style="position:absolute;left:253px;top:317px;width:829px;height:14px;background:#ffffd2"></div>
<div style="position:absolute;left:253px;top:331px;width:829px;height:1px;background:#c4c4c4"></div>
<div style="position:absolute;left:234px;top:331px;width:18px;height:1px;background:#dfe8f2"></div>
<div class="c" style="left:253px;top:316.84px;width:57px;color:#000"><span class="sl" style="left:2px">12356</span></div>
<div class="c" style="left:311px;top:316.84px;width:46px;color:#000"><span class="sl" style="left:2px">11</span></div>
<div class="c" style="left:358px;top:316.84px;width:312px;color:#000"><span class="sl" style="left:2px">Йогурт  фруктовый  1,5 %  жирности, персик, 350 г, Valio</span></div>
<div class="c" style="left:671px;top:316.84px;width:101px;color:#000"><span class="sl" style="left:1.5px">Молоко и кисломолочные</span></div>
<div class="c" style="left:773px;top:316.84px;width:61px;color:#000"><span class="sr" style="right:2px">02.10.2015</span></div>
<div class="c" style="left:835px;top:316.84px;width:63px;color:#000"><span class="sr" style="right:1px">10,00</span></div>
<div class="c" style="left:899px;top:316.84px;width:49px;color:#000"><span class="sl" style="left:3px">Шт</span></div>
<div class="c" style="left:949px;top:316.84px;width:40px;color:#000"><span class="sr" style="right:4px">30,00</span></div>
<div class="c" style="left:990px;top:316.84px;width:68px;color:#000"><span class="sr" style="right:1.5px">300,00</span></div>
<div class="c" style="left:1059px;top:316.84px;width:23px;color:#000"><span class="sl" style="left:2px"></span></div>
<div style="position:absolute;left:253px;top:332px;width:829px;height:14px;background:#ffffd2"></div>
<div style="position:absolute;left:253px;top:346px;width:829px;height:1px;background:#c4c4c4"></div>
<div style="position:absolute;left:234px;top:346px;width:18px;height:1px;background:#dfe8f2"></div>
<div class="c" style="left:253px;top:331.84px;width:57px;color:#000"><span class="sl" style="left:2px">12357</span></div>
<div class="c" style="left:311px;top:331.84px;width:46px;color:#000"><span class="sl" style="left:2px">12</span></div>
<div class="c" style="left:358px;top:331.84px;width:312px;color:#000"><span class="sl" style="left:2px">Яйцо куриное пищевое столовое  1 категории, 10 шт, Роскар</span></div>
<div class="c" style="left:671px;top:331.84px;width:101px;color:#000"><span class="sl" style="left:1.5px">Яйца</span></div>
<div class="c" style="left:773px;top:331.84px;width:61px;color:#000"><span class="sr" style="right:2px">02.10.2015</span></div>
<div class="c" style="left:835px;top:331.84px;width:63px;color:#000"><span class="sr" style="right:1px">10,00</span></div>
<div class="c" style="left:899px;top:331.84px;width:49px;color:#000"><span class="sl" style="left:3px">Упак</span></div>
<div class="c" style="left:949px;top:331.84px;width:40px;color:#000"><span class="sr" style="right:4px">50,00</span></div>
<div class="c" style="left:990px;top:331.84px;width:68px;color:#000"><span class="sr" style="right:1.5px">500,00</span></div>
<div class="c" style="left:1059px;top:331.84px;width:23px;color:#000"><span class="sl" style="left:2px"></span></div>
<div style="position:absolute;left:253px;top:347px;width:829px;height:14px;background:#ffffd2"></div>
<div style="position:absolute;left:253px;top:361px;width:829px;height:1px;background:#c4c4c4"></div>
<div style="position:absolute;left:234px;top:361px;width:18px;height:1px;background:#dfe8f2"></div>
<div class="c" style="left:253px;top:346.84px;width:57px;color:#000"><span class="sl" style="left:2px">12358</span></div>
<div class="c" style="left:311px;top:346.84px;width:46px;color:#000"><span class="sl" style="left:2px">13</span></div>
<div class="c" style="left:358px;top:346.84px;width:312px;color:#000"><span class="sl" style="left:2px">Майонез оливковый Calve 300 мл.</span></div>
<div class="c" style="left:671px;top:346.84px;width:101px;color:#000"><span class="sl" style="left:1.5px">Масложировая  продукция</span></div>
<div class="c" style="left:773px;top:346.84px;width:61px;color:#000"><span class="sr" style="right:2px">02.10.2015</span></div>
<div class="c" style="left:835px;top:346.84px;width:63px;color:#000"><span class="sr" style="right:1px">10,00</span></div>
<div class="c" style="left:899px;top:346.84px;width:49px;color:#000"><span class="sl" style="left:3px">Упак</span></div>
<div class="c" style="left:949px;top:346.84px;width:40px;color:#000"><span class="sr" style="right:4px">20,00</span></div>
<div class="c" style="left:990px;top:346.84px;width:68px;color:#000"><span class="sr" style="right:1.5px">200,00</span></div>
<div class="c" style="left:1059px;top:346.84px;width:23px;color:#000"><span class="sl" style="left:2px"></span></div>
<div style="position:absolute;left:253px;top:362px;width:829px;height:14px;background:#ffffd2"></div>
<div style="position:absolute;left:253px;top:376px;width:829px;height:1px;background:#c4c4c4"></div>
<div style="position:absolute;left:234px;top:376px;width:18px;height:1px;background:#dfe8f2"></div>
<div class="c" style="left:253px;top:361.84px;width:57px;color:#000"><span class="sl" style="left:2px">12359</span></div>
<div class="c" style="left:311px;top:361.84px;width:46px;color:#000"><span class="sl" style="left:2px">14</span></div>
<div class="c" style="left:358px;top:361.84px;width:312px;color:#000"><span class="sl" style="left:2px">Сыр «Российский», Простоквашено</span></div>
<div class="c" style="left:671px;top:361.84px;width:101px;color:#000"><span class="sl" style="left:1.5px">Молоко и кисломолочные</span></div>
<div class="c" style="left:773px;top:361.84px;width:61px;color:#000"><span class="sr" style="right:2px">02.10.2015</span></div>
<div class="c" style="left:835px;top:361.84px;width:63px;color:#000"><span class="sr" style="right:1px">5,00</span></div>
<div class="c" style="left:899px;top:361.84px;width:49px;color:#000"><span class="sl" style="left:3px">Кг</span></div>
<div class="c" style="left:949px;top:361.84px;width:40px;color:#000"><span class="sr" style="right:4px">250,00</span></div>
<div class="c" style="left:990px;top:361.84px;width:68px;color:#000"><span class="sr" style="right:1.5px">1 250,00</span></div>
<div class="c" style="left:1059px;top:361.84px;width:23px;color:#000"><span class="sl" style="left:2px"></span></div>
<div style="position:absolute;left:310px;top:167px;width:1px;height:210px;background:#c4c4c4"></div>
<div style="position:absolute;left:357px;top:167px;width:1px;height:210px;background:#c4c4c4"></div>
<div style="position:absolute;left:670px;top:167px;width:1px;height:210px;background:#c4c4c4"></div>
<div style="position:absolute;left:772px;top:167px;width:1px;height:210px;background:#c4c4c4"></div>
<div style="position:absolute;left:834px;top:167px;width:1px;height:210px;background:#c4c4c4"></div>
<div style="position:absolute;left:898px;top:167px;width:1px;height:210px;background:#c4c4c4"></div>
<div style="position:absolute;left:948px;top:167px;width:1px;height:210px;background:#c4c4c4"></div>
<div style="position:absolute;left:989px;top:167px;width:1px;height:210px;background:#c4c4c4"></div>
<div style="position:absolute;left:1058px;top:167px;width:1px;height:210px;background:#c4c4c4"></div>
<svg style="position:absolute;left:241px;top:169px" width="7" height="11" viewBox="0 0 7 11"><path d="M0 0 L6 5.5 L0 11 Z" fill="#000"/></svg>
<div style="position:absolute;left:234px;top:617px;width:848px;height:17px;background:#fafafa"></div>
<div style="position:absolute;left:252px;top:617px;width:1px;height:17px;background:#e6eef6"></div>
<svg style="position:absolute;left:238px;top:621.5px" width="10" height="10" viewBox="0 0 10 10"><path d="M8.8 2.4 V0.8 H1 L5 4.8 L1 8.8 H9 V7.2" fill="none" stroke="#000" stroke-width="1.5" stroke-linejoin="miter"/></svg>
<div class="c" style="left:990px;top:618.84px;width:68px;color:#861616"><span class="sr" style="right:1.5px">9 860,00</span></div>
<div style="position:absolute;left:234px;top:634px;width:848px;height:17px;background:#f0f0f0"></div>
<div style="position:absolute;left:251px;top:635px;width:203px;height:15px;background:#cdcdcd"></div>
<svg style="position:absolute;left:238px;top:638.0px" width="8" height="8" viewBox="0 0 8 8"><path d="M6 0.6 L2 4 L6 7.4" fill="none" stroke="#5a5a5a" stroke-width="2.3"/></svg>
<svg style="position:absolute;left:1069px;top:638.0px" width="8" height="8" viewBox="0 0 8 8"><path d="M1.2 0.6 L5.2 4 L1.2 7.4" fill="none" stroke="#5a5a5a" stroke-width="2.3"/></svg>
<div style="position:absolute;left:234px;top:651px;width:848px;height:1px;background:#e6e6e6"></div>
<div style="position:absolute;left:8px;top:667px;width:469px;height:19px;box-sizing:border-box;border-top:1px solid #a0a0a0;border-left:1px solid #a0a0a0;border-right:1px solid #fff;border-bottom:1px solid #fff"></div>
<div class="t" style="left:12px;top:669.84px;font-size:12px;line-height:12px;color:#000;font-weight:normal;transform:scaleX(0.9167);transform-origin:0 0;">Готово</div>
<div style="position:absolute;left:479px;top:667px;width:23px;height:19px;box-sizing:border-box;border-top:1px solid #a0a0a0;border-left:1px solid #a0a0a0;border-right:1px solid #fff;border-bottom:1px solid #fff"></div>
<div class="t" style="left:483px;top:669.84px;font-size:12px;line-height:12px;color:#000;font-weight:normal;transform:scaleX(0.9167);transform-origin:0 0;">БД:</div>
<div style="position:absolute;left:504px;top:667px;width:328px;height:19px;box-sizing:border-box;border-top:1px solid #a0a0a0;border-left:1px solid #a0a0a0;border-right:1px solid #fff;border-bottom:1px solid #fff"></div>
<div class="t" style="left:508px;top:669.84px;font-size:12px;line-height:12px;color:#000;font-weight:normal;transform:scaleX(0.9167);transform-origin:0 0;">G:\My\Простой софт\БД\БД\Склад и торговля\GroceryStore.mdb</div>
<div style="position:absolute;left:834px;top:667px;width:48px;height:19px;box-sizing:border-box;border-top:1px solid #a0a0a0;border-left:1px solid #a0a0a0;border-right:1px solid #fff;border-bottom:1px solid #fff"></div>
<div class="t" style="left:838px;top:669.84px;font-size:12px;line-height:12px;color:#000;font-weight:normal;transform:scaleX(0.9167);transform-origin:0 0;">2 940 Kb</div>
<div style="position:absolute;left:884px;top:667px;width:35px;height:19px;box-sizing:border-box;border-top:1px solid #a0a0a0;border-left:1px solid #a0a0a0;border-right:1px solid #fff;border-bottom:1px solid #fff"></div>
<div class="t" style="left:888px;top:669.84px;font-size:12px;line-height:12px;color:#000;font-weight:normal;transform:scaleX(0.9167);transform-origin:0 0;">admin</div>
<div style="position:absolute;left:921px;top:667px;width:87px;height:19px;box-sizing:border-box;border-top:1px solid #a0a0a0;border-left:1px solid #a0a0a0;border-right:1px solid #fff;border-bottom:1px solid #fff"></div>
<div class="t" style="left:925px;top:669.84px;font-size:12px;line-height:12px;color:#000;font-weight:normal;transform:scaleX(0.9167);transform-origin:0 0;">Администратор</div>
<div style="position:absolute;left:1011px;top:667px;width:65px;height:19px;box-sizing:border-box;border-top:1px solid #a0a0a0;border-left:1px solid #a0a0a0;border-right:1px solid #fff;border-bottom:1px solid #fff"></div>
<div class="t" style="left:1016px;top:669.84px;font-size:12px;line-height:12px;color:#000;font-weight:normal;transform:scaleX(0.9167);transform-origin:0 0;">22.05.2018</div>
<svg style="position:absolute;left:1080px;top:672px" width="14" height="14" viewBox="0 0 14 14"><path d="M13 2 L2 13 M13 6 L6 13 M13 10 L10 13" stroke="#9a9a9a" stroke-width="1.2"/></svg>
</body></html>
